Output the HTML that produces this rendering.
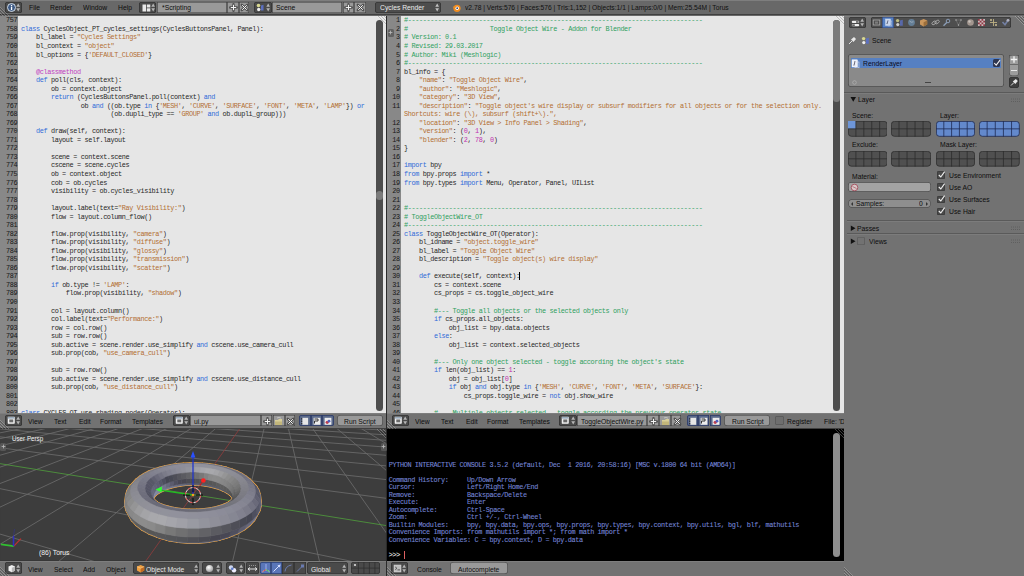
<!DOCTYPE html><html><head><meta charset="utf-8"><style>
*{margin:0;padding:0;box-sizing:border-box}
html,body{width:1024px;height:576px;overflow:hidden;background:#2b2b2b;position:relative}
.ui{position:absolute;font-family:"Liberation Sans",sans-serif;font-size:7.70px;line-height:10px;white-space:pre;color:#0d0d0d;transform:scaleX(0.88);transform-origin:0 0}
.mono{position:absolute;font-family:"Liberation Mono",monospace;font-size:6.850px;line-height:8.533px;letter-spacing:-0.3777px;white-space:pre;color:#262626;-webkit-text-stroke:0px currentColor}
.ab{position:absolute}
</style></head><body>
<div class="ab" style="left:0.00px;top:15.50px;width:386.00px;height:397.80px;overflow:hidden;background:#e6e6e6"><div style="position:absolute;left:0.00px;top:0.00px;width:18.00px;height:397.80px;background:#888888"></div><div class="mono" style="left:6.00px;top:0.90px;width:11.20px;text-align:right;color:#161616">757</div><div class="mono" style="left:6.00px;top:9.43px;width:11.20px;text-align:right;color:#161616">758</div><div class="mono" style="left:21.10px;top:9.43px"><span style="color:#2f6ad8">class</span> CyclesObject_PT_cycles_settings(CyclesButtonsPanel, Panel):</div><div class="mono" style="left:6.00px;top:17.97px;width:11.20px;text-align:right;color:#161616">759</div><div class="mono" style="left:21.10px;top:17.97px">    bl_label = <span style="color:#b26e32">"Cycles Settings"</span></div><div class="mono" style="left:6.00px;top:26.50px;width:11.20px;text-align:right;color:#161616">760</div><div class="mono" style="left:21.10px;top:26.50px">    bl_context = <span style="color:#b26e32">"object"</span></div><div class="mono" style="left:6.00px;top:35.03px;width:11.20px;text-align:right;color:#161616">761</div><div class="mono" style="left:21.10px;top:35.03px">    bl_options = {<span style="color:#b26e32">'DEFAULT_CLOSED'</span>}</div><div class="mono" style="left:6.00px;top:43.56px;width:11.20px;text-align:right;color:#161616">762</div><div class="mono" style="left:6.00px;top:52.10px;width:11.20px;text-align:right;color:#161616">763</div><div class="mono" style="left:21.10px;top:52.10px">    <span style="color:#c040c0">@classmethod</span></div><div class="mono" style="left:6.00px;top:60.63px;width:11.20px;text-align:right;color:#161616">764</div><div class="mono" style="left:21.10px;top:60.63px">    <span style="color:#2f6ad8">def</span> poll(cls, context):</div><div class="mono" style="left:6.00px;top:69.16px;width:11.20px;text-align:right;color:#161616">765</div><div class="mono" style="left:21.10px;top:69.16px">        ob = context.object</div><div class="mono" style="left:6.00px;top:77.70px;width:11.20px;text-align:right;color:#161616">766</div><div class="mono" style="left:21.10px;top:77.70px">        <span style="color:#2f6ad8">return</span> (CyclesButtonsPanel.poll(context) <span style="color:#2f6ad8">and</span></div><div class="mono" style="left:6.00px;top:86.23px;width:11.20px;text-align:right;color:#161616">767</div><div class="mono" style="left:21.10px;top:86.23px">                ob <span style="color:#2f6ad8">and</span> ((ob.type <span style="color:#2f6ad8">in</span> {<span style="color:#b26e32">'MESH'</span>, <span style="color:#b26e32">'CURVE'</span>, <span style="color:#b26e32">'SURFACE'</span>, <span style="color:#b26e32">'FONT'</span>, <span style="color:#b26e32">'META'</span>, <span style="color:#b26e32">'LAMP'</span>}) <span style="color:#2f6ad8">or</span></div><div class="mono" style="left:6.00px;top:94.76px;width:11.20px;text-align:right;color:#161616">768</div><div class="mono" style="left:21.10px;top:94.76px">                        (ob.dupli_type == <span style="color:#b26e32">'GROUP'</span> <span style="color:#2f6ad8">and</span> ob.dupli_group)))</div><div class="mono" style="left:6.00px;top:103.30px;width:11.20px;text-align:right;color:#161616">769</div><div class="mono" style="left:6.00px;top:111.83px;width:11.20px;text-align:right;color:#161616">770</div><div class="mono" style="left:21.10px;top:111.83px">    <span style="color:#2f6ad8">def</span> draw(self, context):</div><div class="mono" style="left:6.00px;top:120.36px;width:11.20px;text-align:right;color:#161616">771</div><div class="mono" style="left:21.10px;top:120.36px">        layout = self.layout</div><div class="mono" style="left:6.00px;top:128.89px;width:11.20px;text-align:right;color:#161616">772</div><div class="mono" style="left:6.00px;top:137.43px;width:11.20px;text-align:right;color:#161616">773</div><div class="mono" style="left:21.10px;top:137.43px">        scene = context.scene</div><div class="mono" style="left:6.00px;top:145.96px;width:11.20px;text-align:right;color:#161616">774</div><div class="mono" style="left:21.10px;top:145.96px">        cscene = scene.cycles</div><div class="mono" style="left:6.00px;top:154.49px;width:11.20px;text-align:right;color:#161616">775</div><div class="mono" style="left:21.10px;top:154.49px">        ob = context.object</div><div class="mono" style="left:6.00px;top:163.03px;width:11.20px;text-align:right;color:#161616">776</div><div class="mono" style="left:21.10px;top:163.03px">        cob = ob.cycles</div><div class="mono" style="left:6.00px;top:171.56px;width:11.20px;text-align:right;color:#161616">777</div><div class="mono" style="left:21.10px;top:171.56px">        visibility = ob.cycles_visibility</div><div class="mono" style="left:6.00px;top:180.09px;width:11.20px;text-align:right;color:#161616">778</div><div class="mono" style="left:6.00px;top:188.63px;width:11.20px;text-align:right;color:#161616">779</div><div class="mono" style="left:21.10px;top:188.63px">        layout.label(text=<span style="color:#b26e32">"Ray Visibility:"</span>)</div><div class="mono" style="left:6.00px;top:197.16px;width:11.20px;text-align:right;color:#161616">780</div><div class="mono" style="left:21.10px;top:197.16px">        flow = layout.column_flow()</div><div class="mono" style="left:6.00px;top:205.69px;width:11.20px;text-align:right;color:#161616">781</div><div class="mono" style="left:6.00px;top:214.22px;width:11.20px;text-align:right;color:#161616">782</div><div class="mono" style="left:21.10px;top:214.22px">        flow.prop(visibility, <span style="color:#b26e32">"camera"</span>)</div><div class="mono" style="left:6.00px;top:222.76px;width:11.20px;text-align:right;color:#161616">783</div><div class="mono" style="left:21.10px;top:222.76px">        flow.prop(visibility, <span style="color:#b26e32">"diffuse"</span>)</div><div class="mono" style="left:6.00px;top:231.29px;width:11.20px;text-align:right;color:#161616">784</div><div class="mono" style="left:21.10px;top:231.29px">        flow.prop(visibility, <span style="color:#b26e32">"glossy"</span>)</div><div class="mono" style="left:6.00px;top:239.82px;width:11.20px;text-align:right;color:#161616">785</div><div class="mono" style="left:21.10px;top:239.82px">        flow.prop(visibility, <span style="color:#b26e32">"transmission"</span>)</div><div class="mono" style="left:6.00px;top:248.36px;width:11.20px;text-align:right;color:#161616">786</div><div class="mono" style="left:21.10px;top:248.36px">        flow.prop(visibility, <span style="color:#b26e32">"scatter"</span>)</div><div class="mono" style="left:6.00px;top:256.89px;width:11.20px;text-align:right;color:#161616">787</div><div class="mono" style="left:6.00px;top:265.42px;width:11.20px;text-align:right;color:#161616">788</div><div class="mono" style="left:21.10px;top:265.42px">        <span style="color:#2f6ad8">if</span> ob.type != <span style="color:#b26e32">'LAMP'</span>:</div><div class="mono" style="left:6.00px;top:273.96px;width:11.20px;text-align:right;color:#161616">789</div><div class="mono" style="left:21.10px;top:273.96px">            flow.prop(visibility, <span style="color:#b26e32">"shadow"</span>)</div><div class="mono" style="left:6.00px;top:282.49px;width:11.20px;text-align:right;color:#161616">790</div><div class="mono" style="left:6.00px;top:291.02px;width:11.20px;text-align:right;color:#161616">791</div><div class="mono" style="left:21.10px;top:291.02px">        col = layout.column()</div><div class="mono" style="left:6.00px;top:299.55px;width:11.20px;text-align:right;color:#161616">792</div><div class="mono" style="left:21.10px;top:299.55px">        col.label(text=<span style="color:#b26e32">"Performance:"</span>)</div><div class="mono" style="left:6.00px;top:308.09px;width:11.20px;text-align:right;color:#161616">793</div><div class="mono" style="left:21.10px;top:308.09px">        row = col.row()</div><div class="mono" style="left:6.00px;top:316.62px;width:11.20px;text-align:right;color:#161616">794</div><div class="mono" style="left:21.10px;top:316.62px">        sub = row.row()</div><div class="mono" style="left:6.00px;top:325.15px;width:11.20px;text-align:right;color:#161616">795</div><div class="mono" style="left:21.10px;top:325.15px">        sub.active = scene.render.use_simplify <span style="color:#2f6ad8">and</span> cscene.use_camera_cull</div><div class="mono" style="left:6.00px;top:333.69px;width:11.20px;text-align:right;color:#161616">796</div><div class="mono" style="left:21.10px;top:333.69px">        sub.prop(cob, <span style="color:#b26e32">"use_camera_cull"</span>)</div><div class="mono" style="left:6.00px;top:342.22px;width:11.20px;text-align:right;color:#161616">797</div><div class="mono" style="left:6.00px;top:350.75px;width:11.20px;text-align:right;color:#161616">798</div><div class="mono" style="left:21.10px;top:350.75px">        sub = row.row()</div><div class="mono" style="left:6.00px;top:359.29px;width:11.20px;text-align:right;color:#161616">799</div><div class="mono" style="left:21.10px;top:359.29px">        sub.active = scene.render.use_simplify <span style="color:#2f6ad8">and</span> cscene.use_distance_cull</div><div class="mono" style="left:6.00px;top:367.82px;width:11.20px;text-align:right;color:#161616">800</div><div class="mono" style="left:21.10px;top:367.82px">        sub.prop(cob, <span style="color:#b26e32">"use_distance_cull"</span>)</div><div class="mono" style="left:6.00px;top:376.35px;width:11.20px;text-align:right;color:#161616">801</div><div class="mono" style="left:6.00px;top:384.88px;width:11.20px;text-align:right;color:#161616">802</div><div class="mono" style="left:6.00px;top:393.42px;width:11.20px;text-align:right;color:#161616">803</div><div class="mono" style="left:21.10px;top:393.42px"><span style="color:#2f6ad8">class</span> CYCLES_OT_use_shading_nodes(Operator):</div><div style="position:absolute;left:376.00px;top:4.00px;width:7.00px;height:391.00px;background:#4d4d4d;border-radius:3.5px"></div><div style="position:absolute;left:376.00px;top:175.30px;width:7.00px;height:9.10px;background:#7b7b7b;border-radius:3.5px"></div></div><div class="ab" style="left:387.00px;top:15.50px;width:456.50px;height:397.80px;overflow:hidden;background:#e6e6e6"><div style="position:absolute;left:0.00px;top:0.00px;width:14.00px;height:397.80px;background:#888888"></div><div class="mono" style="left:1.60px;top:0.90px;width:11.20px;text-align:right;color:#161616">1</div><div class="mono" style="left:17.10px;top:0.90px"><span style="color:#2ea05e">#-------------------------------------------------------------------------------</span></div><div class="mono" style="left:1.60px;top:9.43px;width:11.20px;text-align:right;color:#161616">2</div><div class="mono" style="left:17.10px;top:9.43px"><span style="color:#2ea05e">#                      Toggle Object Wire - Addon for Blender</span></div><div class="mono" style="left:1.60px;top:17.97px;width:11.20px;text-align:right;color:#161616">3</div><div class="mono" style="left:17.10px;top:17.97px"><span style="color:#2ea05e"># Version: 0.1</span></div><div class="mono" style="left:1.60px;top:26.50px;width:11.20px;text-align:right;color:#161616">4</div><div class="mono" style="left:17.10px;top:26.50px"><span style="color:#2ea05e"># Revised: 29.03.2017</span></div><div class="mono" style="left:1.60px;top:35.03px;width:11.20px;text-align:right;color:#161616">5</div><div class="mono" style="left:17.10px;top:35.03px"><span style="color:#2ea05e"># Author: Miki (Meshlogic)</span></div><div class="mono" style="left:1.60px;top:43.56px;width:11.20px;text-align:right;color:#161616">6</div><div class="mono" style="left:17.10px;top:43.56px"><span style="color:#2ea05e">#-------------------------------------------------------------------------------</span></div><div class="mono" style="left:1.60px;top:52.10px;width:11.20px;text-align:right;color:#161616">7</div><div class="mono" style="left:17.10px;top:52.10px">bl_info = {</div><div class="mono" style="left:1.60px;top:60.63px;width:11.20px;text-align:right;color:#161616">8</div><div class="mono" style="left:17.10px;top:60.63px">    <span style="color:#b26e32">"name"</span>: <span style="color:#b26e32">"Toggle Object Wire"</span>,</div><div class="mono" style="left:1.60px;top:69.16px;width:11.20px;text-align:right;color:#161616">9</div><div class="mono" style="left:17.10px;top:69.16px">    <span style="color:#b26e32">"author"</span>: <span style="color:#b26e32">"Meshlogic"</span>,</div><div class="mono" style="left:1.60px;top:77.70px;width:11.20px;text-align:right;color:#161616">10</div><div class="mono" style="left:17.10px;top:77.70px">    <span style="color:#b26e32">"category"</span>: <span style="color:#b26e32">"3D View"</span>,</div><div class="mono" style="left:1.60px;top:86.23px;width:11.20px;text-align:right;color:#161616">11</div><div class="mono" style="left:17.10px;top:86.23px">    <span style="color:#b26e32">"description"</span>: <span style="color:#b26e32">"Toggle object's wire display or subsurf modifiers for all objects or for the selection only.</span></div><div class="mono" style="left:17.10px;top:94.76px"><span style="color:#b26e32">Shortcuts: wire (\), subsurf (shift+\).",</span></div><div class="mono" style="left:1.60px;top:103.30px;width:11.20px;text-align:right;color:#161616">12</div><div class="mono" style="left:17.10px;top:103.30px">    <span style="color:#b26e32">"location"</span>: <span style="color:#b26e32">"3D View &gt; Info Panel &gt; Shading"</span>,</div><div class="mono" style="left:1.60px;top:111.83px;width:11.20px;text-align:right;color:#161616">13</div><div class="mono" style="left:17.10px;top:111.83px">    <span style="color:#b26e32">"version"</span>: (<span style="color:#c030b0">0</span>, <span style="color:#c030b0">1</span>),</div><div class="mono" style="left:1.60px;top:120.36px;width:11.20px;text-align:right;color:#161616">14</div><div class="mono" style="left:17.10px;top:120.36px">    <span style="color:#b26e32">"blender"</span>: (<span style="color:#c030b0">2</span>, <span style="color:#c030b0">78</span>, <span style="color:#c030b0">0</span>)</div><div class="mono" style="left:1.60px;top:128.89px;width:11.20px;text-align:right;color:#161616">15</div><div class="mono" style="left:17.10px;top:128.89px">}</div><div class="mono" style="left:1.60px;top:137.43px;width:11.20px;text-align:right;color:#161616">16</div><div class="mono" style="left:1.60px;top:145.96px;width:11.20px;text-align:right;color:#161616">17</div><div class="mono" style="left:17.10px;top:145.96px"><span style="color:#2f6ad8">import</span> bpy</div><div class="mono" style="left:1.60px;top:154.49px;width:11.20px;text-align:right;color:#161616">18</div><div class="mono" style="left:17.10px;top:154.49px"><span style="color:#2f6ad8">from</span> bpy.props <span style="color:#2f6ad8">import</span> *</div><div class="mono" style="left:1.60px;top:163.03px;width:11.20px;text-align:right;color:#161616">19</div><div class="mono" style="left:17.10px;top:163.03px"><span style="color:#2f6ad8">from</span> bpy.types <span style="color:#2f6ad8">import</span> Menu, Operator, Panel, UIList</div><div class="mono" style="left:1.60px;top:171.56px;width:11.20px;text-align:right;color:#161616">20</div><div class="mono" style="left:1.60px;top:180.09px;width:11.20px;text-align:right;color:#161616">21</div><div class="mono" style="left:1.60px;top:188.63px;width:11.20px;text-align:right;color:#161616">22</div><div class="mono" style="left:17.10px;top:188.63px"><span style="color:#2ea05e">#-------------------------------------------------------------------------------</span></div><div class="mono" style="left:1.60px;top:197.16px;width:11.20px;text-align:right;color:#161616">23</div><div class="mono" style="left:17.10px;top:197.16px"><span style="color:#2ea05e"># ToggleObjectWire_OT</span></div><div class="mono" style="left:1.60px;top:205.69px;width:11.20px;text-align:right;color:#161616">24</div><div class="mono" style="left:17.10px;top:205.69px"><span style="color:#2ea05e">#-------------------------------------------------------------------------------</span></div><div class="mono" style="left:1.60px;top:214.22px;width:11.20px;text-align:right;color:#161616">25</div><div class="mono" style="left:17.10px;top:214.22px"><span style="color:#2f6ad8">class</span> ToggleObjectWire_OT(Operator):</div><div class="mono" style="left:1.60px;top:222.76px;width:11.20px;text-align:right;color:#161616">26</div><div class="mono" style="left:17.10px;top:222.76px">    bl_idname = <span style="color:#b26e32">"object.toggle_wire"</span></div><div class="mono" style="left:1.60px;top:231.29px;width:11.20px;text-align:right;color:#161616">27</div><div class="mono" style="left:17.10px;top:231.29px">    bl_label = <span style="color:#b26e32">"Toggle Object Wire"</span></div><div class="mono" style="left:1.60px;top:239.82px;width:11.20px;text-align:right;color:#161616">28</div><div class="mono" style="left:17.10px;top:239.82px">    bl_description = <span style="color:#b26e32">"Toggle object(s) wire display"</span></div><div class="mono" style="left:1.60px;top:248.36px;width:11.20px;text-align:right;color:#161616">29</div><div class="mono" style="left:1.60px;top:256.89px;width:11.20px;text-align:right;color:#161616">30</div><div class="mono" style="left:17.10px;top:256.89px">    <span style="color:#2f6ad8">def</span> execute(self, context):</div><div class="mono" style="left:1.60px;top:265.42px;width:11.20px;text-align:right;color:#161616">31</div><div class="mono" style="left:17.10px;top:265.42px">        cs = context.scene</div><div class="mono" style="left:1.60px;top:273.96px;width:11.20px;text-align:right;color:#161616">32</div><div class="mono" style="left:17.10px;top:273.96px">        cs_props = cs.toggle_object_wire</div><div class="mono" style="left:1.60px;top:282.49px;width:11.20px;text-align:right;color:#161616">33</div><div class="mono" style="left:1.60px;top:291.02px;width:11.20px;text-align:right;color:#161616">34</div><div class="mono" style="left:17.10px;top:291.02px">        <span style="color:#2ea05e">#--- Toggle all objects or the selected objects only</span></div><div class="mono" style="left:1.60px;top:299.55px;width:11.20px;text-align:right;color:#161616">35</div><div class="mono" style="left:17.10px;top:299.55px">        <span style="color:#2f6ad8">if</span> cs_props.all_objects:</div><div class="mono" style="left:1.60px;top:308.09px;width:11.20px;text-align:right;color:#161616">36</div><div class="mono" style="left:17.10px;top:308.09px">            obj_list = bpy.data.objects</div><div class="mono" style="left:1.60px;top:316.62px;width:11.20px;text-align:right;color:#161616">37</div><div class="mono" style="left:17.10px;top:316.62px">        <span style="color:#2f6ad8">else</span>:</div><div class="mono" style="left:1.60px;top:325.15px;width:11.20px;text-align:right;color:#161616">38</div><div class="mono" style="left:17.10px;top:325.15px">            obj_list = context.selected_objects</div><div class="mono" style="left:1.60px;top:333.69px;width:11.20px;text-align:right;color:#161616">39</div><div class="mono" style="left:1.60px;top:342.22px;width:11.20px;text-align:right;color:#161616">40</div><div class="mono" style="left:17.10px;top:342.22px">        <span style="color:#2ea05e">#--- Only one object selected - toggle according the object's state</span></div><div class="mono" style="left:1.60px;top:350.75px;width:11.20px;text-align:right;color:#161616">41</div><div class="mono" style="left:17.10px;top:350.75px">        <span style="color:#2f6ad8">if</span> len(obj_list) == <span style="color:#c030b0">1</span>:</div><div class="mono" style="left:1.60px;top:359.29px;width:11.20px;text-align:right;color:#161616">42</div><div class="mono" style="left:17.10px;top:359.29px">            obj = obj_list[<span style="color:#c030b0">0</span>]</div><div class="mono" style="left:1.60px;top:367.82px;width:11.20px;text-align:right;color:#161616">43</div><div class="mono" style="left:17.10px;top:367.82px">            <span style="color:#2f6ad8">if</span> obj <span style="color:#2f6ad8">and</span> obj.type <span style="color:#2f6ad8">in</span> {<span style="color:#b26e32">'MESH'</span>, <span style="color:#b26e32">'CURVE'</span>, <span style="color:#b26e32">'FONT'</span>, <span style="color:#b26e32">'META'</span>, <span style="color:#b26e32">'SURFACE'</span>}:</div><div class="mono" style="left:1.60px;top:376.35px;width:11.20px;text-align:right;color:#161616">44</div><div class="mono" style="left:17.10px;top:376.35px">                cs_props.toggle_wire = <span style="color:#2f6ad8">not</span> obj.show_wire</div><div class="mono" style="left:1.60px;top:384.88px;width:11.20px;text-align:right;color:#161616">45</div><div class="mono" style="left:1.60px;top:393.42px;width:11.20px;text-align:right;color:#161616">46</div><div class="mono" style="left:17.10px;top:393.42px">        <span style="color:#2ea05e">#--- Multiple objects selected - toggle according the previous operator state</span></div><div style="position:absolute;left:446.20px;top:4.00px;width:7.20px;height:391.00px;background:#4d4d4d;border-radius:3.5px"></div><div style="position:absolute;left:446.20px;top:4.20px;width:7.20px;height:82.10px;background:#7b7b7b;border-radius:3.5px"></div><div style="position:absolute;left:132.00px;top:256.50px;width:0.90px;height:7.50px;background:#000"></div></div><div style="position:absolute;left:0.00px;top:0.00px;width:1024.00px;height:15.50px;background:#686868"></div><div style="position:absolute;left:0.00px;top:0.00px;width:1024.00px;height:0.80px;background:#7e7e7e"></div><div style="position:absolute;left:0.00px;top:14.30px;width:1024.00px;height:1.20px;background:#404040"></div><div style="position:absolute;left:5.00px;top:2.00px;width:17.00px;height:11.00px;background:#4a4a4a;border-radius:2.5px;box-shadow:inset 0 0 0 0.6px #2e2e2e"></div><svg class="ab" style="left:7.20px;top:3.20px;" width="9.00" height="9.00" viewBox="0 0 9 9"><circle cx="4.5" cy="4.5" r="4" fill="#3d5a85" stroke="#dfe8f0" stroke-width="0.9"/><rect x="3.9" y="3.7" width="1.3" height="3.4" fill="#fff"/><circle cx="4.55" cy="2.5" r="0.75" fill="#fff"/></svg><svg class="ab" style="left:16.30px;top:3.00px;" width="4.40" height="9.00" viewBox="0 0 4.4 9"><path d="M0.3 3.8 L2.2 0.6 L4.1 3.8Z M0.3 5.2 L2.2 8.4 L4.1 5.2Z" fill="#d0d0d0" opacity="0.8"/></svg><div class="ui" style="left:29.00px;top:3.20px;color:#0d0d0d;font-size:7.7px;">File</div><div class="ui" style="left:50.00px;top:3.20px;color:#0d0d0d;font-size:7.7px;">Render</div><div class="ui" style="left:83.00px;top:3.20px;color:#0d0d0d;font-size:7.7px;">Window</div><div class="ui" style="left:118.00px;top:3.20px;color:#0d0d0d;font-size:7.7px;">Help</div><div style="position:absolute;left:139.40px;top:2.00px;width:16.90px;height:11.00px;background:#4a4a4a;border-radius:2.5px;box-shadow:inset 0 0 0 0.6px #2e2e2e"></div><svg class="ab" style="left:141.50px;top:3.50px;" width="9.00" height="8.00" viewBox="0 0 9 8"><rect x="0.5" y="0.5" width="3.5" height="7" fill="#e8e8e8"/><rect x="4.8" y="0.5" width="3.5" height="3" fill="#e8e8e8"/><rect x="4.8" y="4.3" width="3.5" height="3.2" fill="#e8e8e8"/></svg><svg class="ab" style="left:150.60px;top:3.00px;" width="4.40" height="9.00" viewBox="0 0 4.4 9"><path d="M0.3 3.8 L2.2 0.6 L4.1 3.8Z M0.3 5.2 L2.2 8.4 L4.1 5.2Z" fill="#d0d0d0" opacity="0.8"/></svg><div style="position:absolute;left:156.90px;top:2.00px;width:70.40px;height:11.00px;background:#999999;border-radius:0px;box-shadow:inset 0 0 0 0.6px #3a3a3a"></div><div class="ui" style="left:161.50px;top:3.20px;color:#0d0d0d;font-size:7.7px;">*Scripting</div><div style="position:absolute;left:227.30px;top:2.00px;width:11.50px;height:11.00px;background:#999999;border-radius:0px;box-shadow:inset 0 0 0 0.6px #3a3a3a"></div><svg class="ab" style="left:229.30px;top:2.80px;" width="9.00" height="9.00" viewBox="0 0 9 9"><path d="M4.5 1.2 V7.8 M1.2 4.5 H7.8" stroke="#505050" stroke-width="2.4" stroke-linecap="round"/><path d="M4.5 1.8 V7.2 M1.8 4.5 H7.2" stroke="#f4f4f4" stroke-width="1.0"/></svg><div style="position:absolute;left:238.80px;top:2.00px;width:10.60px;height:11.00px;background:#999999;border-radius:0px;box-shadow:inset 0 0 0 0.6px #3a3a3a"></div><svg class="ab" style="left:240.30px;top:2.80px;" width="9.00" height="9.00" viewBox="0 0 9 9"><path d="M1.8 1.8 L7.2 7.2 M7.2 1.8 L1.8 7.2" stroke="#505050" stroke-width="2.4" stroke-linecap="round"/><path d="M2.2 2.2 L6.8 6.8 M6.8 2.2 L2.2 6.8" stroke="#f4f4f4" stroke-width="1.0"/></svg><div style="position:absolute;left:254.40px;top:2.00px;width:17.50px;height:11.00px;background:#4a4a4a;border-radius:2.5px;box-shadow:inset 0 0 0 0.6px #2e2e2e"></div><svg class="ab" style="left:256.00px;top:3.00px;" width="9.00" height="9.00" viewBox="0 0 9 9"><circle cx="2.5" cy="2.5" r="1.8" fill="#d8d890"/><circle cx="2.7" cy="6.5" r="1.7" fill="#eee"/><path d="M5 2.5 L7.5 1.8 L7.5 7.5 L5 7.5Z" fill="#5b6fc0"/></svg><svg class="ab" style="left:266.10px;top:3.00px;" width="4.40" height="9.00" viewBox="0 0 4.4 9"><path d="M0.3 3.8 L2.2 0.6 L4.1 3.8Z M0.3 5.2 L2.2 8.4 L4.1 5.2Z" fill="#d0d0d0" opacity="0.8"/></svg><div style="position:absolute;left:271.90px;top:2.00px;width:70.60px;height:11.00px;background:#999999;border-radius:0px;box-shadow:inset 0 0 0 0.6px #3a3a3a"></div><div class="ui" style="left:276.00px;top:3.20px;color:#0d0d0d;font-size:7.7px;">Scene</div><div style="position:absolute;left:342.50px;top:2.00px;width:11.50px;height:11.00px;background:#999999;border-radius:0px;box-shadow:inset 0 0 0 0.6px #3a3a3a"></div><svg class="ab" style="left:343.80px;top:2.80px;" width="9.00" height="9.00" viewBox="0 0 9 9"><path d="M4.5 1.2 V7.8 M1.2 4.5 H7.8" stroke="#505050" stroke-width="2.4" stroke-linecap="round"/><path d="M4.5 1.8 V7.2 M1.8 4.5 H7.2" stroke="#f4f4f4" stroke-width="1.0"/></svg><div style="position:absolute;left:354.00px;top:2.00px;width:12.30px;height:11.00px;background:#999999;border-radius:0px;box-shadow:inset 0 0 0 0.6px #3a3a3a"></div><svg class="ab" style="left:355.70px;top:2.80px;" width="9.00" height="9.00" viewBox="0 0 9 9"><path d="M1.8 1.8 L7.2 7.2 M7.2 1.8 L1.8 7.2" stroke="#505050" stroke-width="2.4" stroke-linecap="round"/><path d="M2.2 2.2 L6.8 6.8 M6.8 2.2 L2.2 6.8" stroke="#f4f4f4" stroke-width="1.0"/></svg><div style="position:absolute;left:375.00px;top:1.80px;width:65.60px;height:11.40px;background:#4d4d4d;border-radius:3px;box-shadow:inset 0 0 0 0.6px #2e2e2e"></div><div class="ui" style="left:379.50px;top:3.20px;color:#ececec;font-size:7.7px;">Cycles Render</div><svg class="ab" style="left:434.80px;top:3.00px;" width="4.40" height="9.00" viewBox="0 0 4.4 9"><path d="M0.3 3.8 L2.2 0.6 L4.1 3.8Z M0.3 5.2 L2.2 8.4 L4.1 5.2Z" fill="#e0e0e0" opacity="0.8"/></svg><svg class="ab" style="left:451.50px;top:2.50px;" width="9.00" height="10.00" viewBox="0 0 9 10"><circle cx="5" cy="5.3" r="3.6" fill="#f08c20"/><circle cx="5.2" cy="5.2" r="1.7" fill="#fff"/><circle cx="5.2" cy="5.2" r="0.9" fill="#2c4a80"/><path d="M0.5 4 L3 3.3 L2.2 5Z" fill="#f08c20"/></svg><div class="ui" style="left:465.30px;top:3.20px;color:#101010;font-size:7.7px;transform:scaleX(0.870)">v2.78 | Verts:576 | Faces:576 | Tris:1,152 | Objects:1/1 | Lamps:0/0 | Mem:25.54M | Torus</div><div style="position:absolute;left:0.00px;top:413.40px;width:386.00px;height:15.50px;background:#727272"></div><div style="position:absolute;left:0.00px;top:413.40px;width:386.00px;height:0.80px;background:#7e7e7e"></div><div style="position:absolute;left:0.00px;top:427.70px;width:386.00px;height:1.20px;background:#404040"></div><div style="position:absolute;left:5.00px;top:415.00px;width:17.00px;height:11.30px;background:#4a4a4a;border-radius:2.5px;box-shadow:inset 0 0 0 0.6px #2e2e2e"></div><svg class="ab" style="left:7.20px;top:416.20px;" width="8.50" height="8.50" viewBox="0 0 8.5 8.5"><rect x="1" y="1" width="6.5" height="6.5" fill="#e8e8e8" stroke="#fff" stroke-width="0.5"/><rect x="2.3" y="3.5" width="3.9" height="2.8" fill="#6a6a6a"/><rect x="1" y="1" width="6.5" height="1.6" fill="#9ab"/></svg><svg class="ab" style="left:16.30px;top:416.15px;" width="4.40" height="9.00" viewBox="0 0 4.4 9"><path d="M0.3 3.8 L2.2 0.6 L4.1 3.8Z M0.3 5.2 L2.2 8.4 L4.1 5.2Z" fill="#d0d0d0" opacity="0.8"/></svg><div class="ui" style="left:28.00px;top:417.40px;color:#0d0d0d;font-size:7.7px;">View</div><div class="ui" style="left:53.50px;top:417.40px;color:#0d0d0d;font-size:7.7px;">Text</div><div class="ui" style="left:78.50px;top:417.40px;color:#0d0d0d;font-size:7.7px;">Edit</div><div class="ui" style="left:100.00px;top:417.40px;color:#0d0d0d;font-size:7.7px;">Format</div><div class="ui" style="left:132.20px;top:417.40px;color:#0d0d0d;font-size:7.7px;">Templates</div><div style="position:absolute;left:172.50px;top:415.00px;width:17.50px;height:11.30px;background:#4a4a4a;border-radius:2.5px;box-shadow:inset 0 0 0 0.6px #2e2e2e"></div><svg class="ab" style="left:174.50px;top:416.40px;" width="8.50" height="8.50" viewBox="0 0 8.5 8.5"><rect x="1" y="1" width="6.5" height="6.5" fill="#e8e8e8" stroke="#fff" stroke-width="0.5"/><rect x="2.3" y="3.5" width="3.9" height="2.8" fill="#6a6a6a"/><rect x="1" y="1" width="6.5" height="1.6" fill="#9ab"/></svg><svg class="ab" style="left:184.30px;top:416.10px;" width="4.40" height="9.00" viewBox="0 0 4.4 9"><path d="M0.3 3.8 L2.2 0.6 L4.1 3.8Z M0.3 5.2 L2.2 8.4 L4.1 5.2Z" fill="#d0d0d0" opacity="0.8"/></svg><div style="position:absolute;left:190.00px;top:415.00px;width:70.60px;height:11.30px;background:#999999;border-radius:0px;box-shadow:inset 0 0 0 0.6px #3a3a3a"></div><div class="ui" style="left:194.00px;top:417.40px;color:#0d0d0d;font-size:7.7px;">ui.py</div><div style="position:absolute;left:260.60px;top:415.00px;width:11.90px;height:11.30px;background:#999999;border-radius:0px;box-shadow:inset 0 0 0 0.6px #3a3a3a"></div><svg class="ab" style="left:262.60px;top:416.50px;" width="9.00" height="9.00" viewBox="0 0 9 9"><path d="M4.5 1.2 V7.8 M1.2 4.5 H7.8" stroke="#505050" stroke-width="2.4" stroke-linecap="round"/><path d="M4.5 1.8 V7.2 M1.8 4.5 H7.2" stroke="#f4f4f4" stroke-width="1.0"/></svg><div style="position:absolute;left:272.50px;top:415.00px;width:12.50px;height:11.30px;background:#999999;border-radius:0px;box-shadow:inset 0 0 0 0.6px #3a3a3a"></div><svg class="ab" style="left:274.10px;top:416.60px;" width="9.00" height="9.00" viewBox="0 0 9 9"><path d="M1 3 H4 L4.8 2 H8 V8 H1Z" fill="#d8cf9a"/><rect x="1" y="4.5" width="7" height="3.5" fill="#c2b67a"/><path d="M3 1 Q5 -0.2 7 1.2" stroke="#ddd" stroke-width="0.6" fill="none"/></svg><div style="position:absolute;left:285.00px;top:415.00px;width:10.10px;height:11.30px;background:#999999;border-radius:0px;box-shadow:inset 0 0 0 0.6px #3a3a3a"></div><svg class="ab" style="left:286.10px;top:416.60px;" width="9.00" height="9.00" viewBox="0 0 9 9"><path d="M1.8 1.8 L7.2 7.2 M7.2 1.8 L1.8 7.2" stroke="#505050" stroke-width="2.4" stroke-linecap="round"/><path d="M2.2 2.2 L6.8 6.8 M6.8 2.2 L2.2 6.8" stroke="#f4f4f4" stroke-width="1.0"/></svg><div style="position:absolute;left:299.40px;top:415.00px;width:11.45px;height:11.30px;background:#5b6a8a;box-shadow:inset 0 0 0 0.8px #2c3a66;border-radius:2.5px 0 0 2.5px"></div><div style="position:absolute;left:310.85px;top:415.00px;width:11.45px;height:11.30px;background:#5b6a8a;box-shadow:inset 0 0 0 0.8px #2c3a66;"></div><div style="position:absolute;left:322.30px;top:415.00px;width:11.45px;height:11.30px;background:#5b6a8a;box-shadow:inset 0 0 0 0.8px #2c3a66;border-radius:0 2.5px 2.5px 0"></div><svg class="ab" style="left:301.40px;top:416.50px;" width="8.00" height="8.50" viewBox="0 0 8 8.5"><rect x="1.3" y="0.8" width="5.8" height="7" fill="#e6e6e6"/><rect x="0.2" y="1.2" width="1" height="1.3" fill="#222"/><rect x="0.2" y="3.6" width="1" height="1.3" fill="#222"/><rect x="0.2" y="6" width="1" height="1.3" fill="#222"/></svg><svg class="ab" style="left:312.90px;top:416.50px;" width="8.00" height="8.50" viewBox="0 0 8 8.5"><rect x="0.6" y="0.8" width="6.8" height="7" fill="#ececec"/><path d="M1.5 2 H5 V4 H1.5 V6.5" stroke="#333" stroke-width="1" fill="none"/></svg><svg class="ab" style="left:324.40px;top:416.50px;" width="8.00" height="8.50" viewBox="0 0 8 8.5"><rect x="0.6" y="0.8" width="6.8" height="7" fill="#ececec"/><circle cx="3.2" cy="5.3" r="1.6" fill="#c04050"/><circle cx="5" cy="4.2" r="1.4" fill="#5060c0"/></svg><div style="position:absolute;left:336.90px;top:415.00px;width:46.10px;height:11.30px;background:#999999;border-radius:3.5px;box-shadow:inset 0 0 0 0.6px #3a3a3a"></div><div class="ui" style="left:344.45px;top:417.40px;color:#0d0d0d;font-size:7.7px;">Run Script</div><div style="position:absolute;left:387.00px;top:413.40px;width:456.50px;height:15.50px;background:#727272"></div><div style="position:absolute;left:387.00px;top:413.40px;width:456.50px;height:0.80px;background:#7e7e7e"></div><div style="position:absolute;left:387.00px;top:427.70px;width:456.50px;height:1.20px;background:#404040"></div><div style="position:absolute;left:392.00px;top:415.00px;width:17.00px;height:11.30px;background:#4a4a4a;border-radius:2.5px;box-shadow:inset 0 0 0 0.6px #2e2e2e"></div><svg class="ab" style="left:394.20px;top:416.20px;" width="8.50" height="8.50" viewBox="0 0 8.5 8.5"><rect x="1" y="1" width="6.5" height="6.5" fill="#e8e8e8" stroke="#fff" stroke-width="0.5"/><rect x="2.3" y="3.5" width="3.9" height="2.8" fill="#6a6a6a"/><rect x="1" y="1" width="6.5" height="1.6" fill="#9ab"/></svg><svg class="ab" style="left:403.30px;top:416.15px;" width="4.40" height="9.00" viewBox="0 0 4.4 9"><path d="M0.3 3.8 L2.2 0.6 L4.1 3.8Z M0.3 5.2 L2.2 8.4 L4.1 5.2Z" fill="#d0d0d0" opacity="0.8"/></svg><div class="ui" style="left:415.00px;top:417.40px;color:#0d0d0d;font-size:7.7px;">View</div><div class="ui" style="left:440.50px;top:417.40px;color:#0d0d0d;font-size:7.7px;">Text</div><div class="ui" style="left:465.50px;top:417.40px;color:#0d0d0d;font-size:7.7px;">Edit</div><div class="ui" style="left:487.00px;top:417.40px;color:#0d0d0d;font-size:7.7px;">Format</div><div class="ui" style="left:519.20px;top:417.40px;color:#0d0d0d;font-size:7.7px;">Templates</div><div style="position:absolute;left:559.40px;top:415.00px;width:17.50px;height:11.30px;background:#4a4a4a;border-radius:2.5px;box-shadow:inset 0 0 0 0.6px #2e2e2e"></div><svg class="ab" style="left:561.40px;top:416.40px;" width="8.50" height="8.50" viewBox="0 0 8.5 8.5"><rect x="1" y="1" width="6.5" height="6.5" fill="#e8e8e8" stroke="#fff" stroke-width="0.5"/><rect x="2.3" y="3.5" width="3.9" height="2.8" fill="#6a6a6a"/><rect x="1" y="1" width="6.5" height="1.6" fill="#9ab"/></svg><svg class="ab" style="left:571.20px;top:416.10px;" width="4.40" height="9.00" viewBox="0 0 4.4 9"><path d="M0.3 3.8 L2.2 0.6 L4.1 3.8Z M0.3 5.2 L2.2 8.4 L4.1 5.2Z" fill="#d0d0d0" opacity="0.8"/></svg><div style="position:absolute;left:576.90px;top:415.00px;width:70.10px;height:11.30px;background:#999999;border-radius:0px;box-shadow:inset 0 0 0 0.6px #3a3a3a"></div><div class="ui" style="left:580.90px;top:417.40px;color:#0d0d0d;font-size:7.7px;">ToggleObjectWire.py</div><div style="position:absolute;left:647.00px;top:415.00px;width:11.90px;height:11.30px;background:#999999;border-radius:0px;box-shadow:inset 0 0 0 0.6px #3a3a3a"></div><svg class="ab" style="left:649.00px;top:416.50px;" width="9.00" height="9.00" viewBox="0 0 9 9"><path d="M4.5 1.2 V7.8 M1.2 4.5 H7.8" stroke="#505050" stroke-width="2.4" stroke-linecap="round"/><path d="M4.5 1.8 V7.2 M1.8 4.5 H7.2" stroke="#f4f4f4" stroke-width="1.0"/></svg><div style="position:absolute;left:658.90px;top:415.00px;width:12.50px;height:11.30px;background:#999999;border-radius:0px;box-shadow:inset 0 0 0 0.6px #3a3a3a"></div><svg class="ab" style="left:660.50px;top:416.60px;" width="9.00" height="9.00" viewBox="0 0 9 9"><path d="M1 3 H4 L4.8 2 H8 V8 H1Z" fill="#d8cf9a"/><rect x="1" y="4.5" width="7" height="3.5" fill="#c2b67a"/><path d="M3 1 Q5 -0.2 7 1.2" stroke="#ddd" stroke-width="0.6" fill="none"/></svg><div style="position:absolute;left:671.40px;top:415.00px;width:10.10px;height:11.30px;background:#999999;border-radius:0px;box-shadow:inset 0 0 0 0.6px #3a3a3a"></div><svg class="ab" style="left:672.50px;top:416.60px;" width="9.00" height="9.00" viewBox="0 0 9 9"><path d="M1.8 1.8 L7.2 7.2 M7.2 1.8 L1.8 7.2" stroke="#505050" stroke-width="2.4" stroke-linecap="round"/><path d="M2.2 2.2 L6.8 6.8 M6.8 2.2 L2.2 6.8" stroke="#f4f4f4" stroke-width="1.0"/></svg><div style="position:absolute;left:686.60px;top:415.00px;width:11.45px;height:11.30px;background:#5b6a8a;box-shadow:inset 0 0 0 0.8px #2c3a66;border-radius:2.5px 0 0 2.5px"></div><div style="position:absolute;left:698.05px;top:415.00px;width:11.45px;height:11.30px;background:#5b6a8a;box-shadow:inset 0 0 0 0.8px #2c3a66;"></div><div style="position:absolute;left:709.50px;top:415.00px;width:11.45px;height:11.30px;background:#5b6a8a;box-shadow:inset 0 0 0 0.8px #2c3a66;border-radius:0 2.5px 2.5px 0"></div><svg class="ab" style="left:688.60px;top:416.50px;" width="8.00" height="8.50" viewBox="0 0 8 8.5"><rect x="1.3" y="0.8" width="5.8" height="7" fill="#e6e6e6"/><rect x="0.2" y="1.2" width="1" height="1.3" fill="#222"/><rect x="0.2" y="3.6" width="1" height="1.3" fill="#222"/><rect x="0.2" y="6" width="1" height="1.3" fill="#222"/></svg><svg class="ab" style="left:700.10px;top:416.50px;" width="8.00" height="8.50" viewBox="0 0 8 8.5"><rect x="0.6" y="0.8" width="6.8" height="7" fill="#ececec"/><path d="M1.5 2 H5 V4 H1.5 V6.5" stroke="#333" stroke-width="1" fill="none"/></svg><svg class="ab" style="left:711.60px;top:416.50px;" width="8.00" height="8.50" viewBox="0 0 8 8.5"><rect x="0.6" y="0.8" width="6.8" height="7" fill="#ececec"/><circle cx="3.2" cy="5.3" r="1.6" fill="#c04050"/><circle cx="5" cy="4.2" r="1.4" fill="#5060c0"/></svg><div style="position:absolute;left:724.30px;top:415.00px;width:45.70px;height:11.30px;background:#999999;border-radius:3.5px;box-shadow:inset 0 0 0 0.6px #3a3a3a"></div><div class="ui" style="left:731.65px;top:417.40px;color:#0d0d0d;font-size:7.7px;">Run Script</div><div style="position:absolute;left:775.00px;top:415.50px;width:8.50px;height:9.50px;border-radius:2px;box-shadow:inset 0 0 0 0.7px #555;background:#6e6e6e"></div><div class="ui" style="left:787.40px;top:417.40px;color:#0d0d0d;font-size:7.7px;">Register</div><div class="ui" style="left:824.30px;top:417.40px;color:#0d0d0d;font-size:7.7px;">File: 'D:\Blender</div><svg class="ab" style="left:0px;top:428.9px" width="386" height="131.7" viewBox="0 0 386 131.7"><rect width="386" height="131.7" fill="#3d3d3d"/><line x1="66802.5" y1="9678.9" x2="532.6" y2="-14.4" stroke="#6c6c6c" stroke-width="0.85"/><line x1="62213.3" y1="9678.9" x2="509.9" y2="-15.2" stroke="#6c6c6c" stroke-width="0.85"/><line x1="57624.1" y1="9678.9" x2="488.1" y2="-16.0" stroke="#6c6c6c" stroke-width="0.85"/><line x1="53035.0" y1="9678.9" x2="467.2" y2="-16.7" stroke="#6c6c6c" stroke-width="0.85"/><line x1="48445.8" y1="9678.9" x2="447.1" y2="-17.4" stroke="#6c6c6c" stroke-width="0.85"/><line x1="43856.6" y1="9678.9" x2="427.8" y2="-18.1" stroke="#6c6c6c" stroke-width="0.85"/><line x1="-75945.7" y1="9678.9" x2="-13045.9" y2="1561.9" stroke="#6c6c6c" stroke-width="0.85"/><line x1="39267.4" y1="9678.9" x2="409.3" y2="-18.8" stroke="#6c6c6c" stroke-width="0.85"/><line x1="-62336.4" y1="9678.9" x2="-3262.1" y2="376.7" stroke="#6c6c6c" stroke-width="0.85"/><line x1="34678.2" y1="9678.9" x2="391.4" y2="-19.4" stroke="#6c6c6c" stroke-width="0.85"/><line x1="-48727.1" y1="9678.9" x2="-1763.8" y2="195.2" stroke="#6c6c6c" stroke-width="0.85"/><line x1="30089.1" y1="9678.9" x2="374.2" y2="-20.0" stroke="#6c6c6c" stroke-width="0.85"/><line x1="-35117.9" y1="9678.9" x2="-1156.9" y2="121.7" stroke="#6c6c6c" stroke-width="0.85"/><line x1="25499.9" y1="9678.9" x2="357.7" y2="-20.6" stroke="#6c6c6c" stroke-width="0.85"/><line x1="-21508.6" y1="9678.9" x2="-828.3" y2="81.9" stroke="#6c6c6c" stroke-width="0.85"/><line x1="20910.7" y1="9678.9" x2="341.7" y2="-21.1" stroke="#6c6c6c" stroke-width="0.85"/><line x1="-7899.3" y1="9678.9" x2="-622.3" y2="56.9" stroke="#6c6c6c" stroke-width="0.85"/><line x1="16321.5" y1="9678.9" x2="326.3" y2="-21.7" stroke="#6c6c6c" stroke-width="0.85"/><line x1="5709.9" y1="9678.9" x2="-481.0" y2="39.8" stroke="#6c6c6c" stroke-width="0.85"/><line x1="11732.3" y1="9678.9" x2="311.4" y2="-22.2" stroke="#6c6c6c" stroke-width="0.85"/><line x1="19319.2" y1="9678.9" x2="-378.1" y2="27.4" stroke="#6c6c6c" stroke-width="0.85"/><line x1="7143.1" y1="9678.9" x2="297.0" y2="-22.7" stroke="#6c6c6c" stroke-width="0.85"/><line x1="32928.5" y1="9678.9" x2="-299.9" y2="17.9" stroke="#6c6c6c" stroke-width="0.85"/><line x1="2554.0" y1="9678.9" x2="283.1" y2="-23.2" stroke="#6c6c6c" stroke-width="0.85"/><line x1="46537.8" y1="9678.9" x2="-238.3" y2="10.4" stroke="#6c6c6c" stroke-width="0.85"/><line x1="-2035.2" y1="9678.9" x2="269.6" y2="-23.6" stroke="#6c6c6c" stroke-width="0.85"/><line x1="7265.4" y1="970.4" x2="-147.7" y2="-0.6" stroke="#6c6c6c" stroke-width="0.85"/><line x1="-11213.6" y1="9678.9" x2="244.0" y2="-24.5" stroke="#6c6c6c" stroke-width="0.85"/><line x1="2816.4" y1="319.6" x2="-113.4" y2="-4.7" stroke="#6c6c6c" stroke-width="0.85"/><line x1="-15802.8" y1="9678.9" x2="231.8" y2="-25.0" stroke="#6c6c6c" stroke-width="0.85"/><line x1="1828.4" y1="175.1" x2="-84.3" y2="-8.2" stroke="#6c6c6c" stroke-width="0.85"/><line x1="-20392.0" y1="9678.9" x2="219.9" y2="-25.4" stroke="#6c6c6c" stroke-width="0.85"/><line x1="1393.8" y1="111.5" x2="-59.1" y2="-11.3" stroke="#6c6c6c" stroke-width="0.85"/><line x1="-24981.1" y1="9678.9" x2="208.5" y2="-25.8" stroke="#6c6c6c" stroke-width="0.85"/><line x1="1149.3" y1="75.8" x2="-37.3" y2="-13.9" stroke="#6c6c6c" stroke-width="0.85"/><line x1="-29570.3" y1="9678.9" x2="197.3" y2="-26.2" stroke="#6c6c6c" stroke-width="0.85"/><line x1="992.6" y1="52.8" x2="-18.1" y2="-16.3" stroke="#6c6c6c" stroke-width="0.85"/><line x1="-34159.5" y1="9678.9" x2="186.5" y2="-26.5" stroke="#6c6c6c" stroke-width="0.85"/><line x1="883.6" y1="36.9" x2="-1.2" y2="-18.3" stroke="#6c6c6c" stroke-width="0.85"/><line x1="-38748.7" y1="9678.9" x2="176.0" y2="-26.9" stroke="#6c6c6c" stroke-width="0.85"/><line x1="803.4" y1="25.2" x2="13.9" y2="-20.1" stroke="#6c6c6c" stroke-width="0.85"/><line x1="-43337.9" y1="9678.9" x2="165.8" y2="-27.3" stroke="#6c6c6c" stroke-width="0.85"/><line x1="741.9" y1="16.2" x2="27.5" y2="-21.8" stroke="#6c6c6c" stroke-width="0.85"/><line x1="-47927.1" y1="9678.9" x2="155.9" y2="-27.6" stroke="#6c6c6c" stroke-width="0.85"/><line x1="693.3" y1="9.1" x2="39.7" y2="-23.3" stroke="#6c6c6c" stroke-width="0.85"/><line x1="-52516.2" y1="9678.9" x2="146.2" y2="-27.9" stroke="#6c6c6c" stroke-width="0.85"/><line x1="653.8" y1="3.3" x2="50.8" y2="-24.6" stroke="#6c6c6c" stroke-width="0.85"/><line x1="-57105.4" y1="9678.9" x2="136.9" y2="-28.3" stroke="#6c6c6c" stroke-width="0.85"/><line x1="621.2" y1="-1.5" x2="60.9" y2="-25.8" stroke="#6c6c6c" stroke-width="0.85"/><line x1="-61694.6" y1="9678.9" x2="127.7" y2="-28.6" stroke="#6c6c6c" stroke-width="0.85"/><line x1="593.8" y1="-5.5" x2="70.1" y2="-26.9" stroke="#6c6c6c" stroke-width="0.85"/><line x1="-66283.8" y1="9678.9" x2="118.9" y2="-28.9" stroke="#6c6c6c" stroke-width="0.85"/><line x1="570.4" y1="-8.9" x2="78.6" y2="-28.0" stroke="#6c6c6c" stroke-width="0.85"/><line x1="-70873.0" y1="9678.9" x2="110.2" y2="-29.2" stroke="#6c6c6c" stroke-width="0.85"/><line x1="550.2" y1="-11.9" x2="86.4" y2="-28.9" stroke="#6c6c6c" stroke-width="0.85"/><line x1="-75462.1" y1="9678.9" x2="101.8" y2="-29.5" stroke="#6c6c6c" stroke-width="0.85"/><line x1="532.6" y1="-14.4" x2="93.6" y2="-29.8" stroke="#6c6c6c" stroke-width="0.85"/><line x1="-80051.3" y1="9678.9" x2="93.6" y2="-29.8" stroke="#6c6c6c" stroke-width="0.85"/><line x1="60147.0" y1="9678.9" x2="-188.7" y2="4.4" stroke="#4f9a3c" stroke-width="0.85"/><line x1="-6624.4" y1="9678.9" x2="256.6" y2="-24.1" stroke="#8c3c3c" stroke-width="0.85"/><g fill="#e8a040" stroke="#e8a040" stroke-width="2.0" stroke-linejoin="round"><polygon points="196.1,34.3 189.7,34.3 190.0,34.8 195.8,34.8"/><polygon points="202.4,34.5 196.1,34.3 195.8,34.8 201.6,35.0"/><polygon points="189.7,34.3 183.4,34.6 184.2,35.1 190.0,34.8"/><polygon points="208.7,35.1 202.4,34.5 201.6,35.0 207.3,35.6"/><polygon points="183.4,34.6 177.1,35.1 178.5,35.6 184.2,35.1"/><polygon points="195.2,54.0 190.7,54.0 190.4,55.9 195.4,55.8"/><polygon points="214.9,36.0 208.7,35.1 207.3,35.6 212.9,36.4"/><polygon points="177.1,35.1 170.9,36.0 172.9,36.4 178.5,35.6"/><polygon points="199.7,54.2 195.2,54.0 195.4,55.8 200.4,56.1"/><polygon points="190.7,54.0 186.1,54.2 185.5,56.1 190.4,55.9"/><polygon points="204.2,54.7 199.7,54.2 200.4,56.1 205.2,56.7"/><polygon points="186.1,54.2 181.6,54.7 180.6,56.7 185.5,56.1"/><polygon points="208.6,55.5 204.2,54.7 205.2,56.7 210.0,57.5"/><polygon points="220.9,37.2 214.9,36.0 212.9,36.4 218.3,37.4"/><polygon points="181.6,54.7 177.3,55.5 175.9,57.6 180.6,56.7"/><polygon points="170.9,36.0 164.9,37.2 167.5,37.5 172.9,36.4"/><polygon points="195.8,34.8 190.0,34.8 190.3,38.2 195.5,38.2"/><polygon points="201.6,35.0 195.8,34.8 195.5,38.2 200.7,38.4"/><polygon points="190.0,34.8 184.2,35.1 185.2,38.4 190.3,38.2"/><polygon points="212.8,56.5 208.6,55.5 210.0,57.5 214.6,58.7"/><polygon points="177.3,55.5 173.1,56.5 171.3,58.7 175.9,57.6"/><polygon points="207.3,35.6 201.6,35.0 200.7,38.4 205.8,38.9"/><polygon points="184.2,35.1 178.5,35.6 180.1,38.9 185.2,38.4"/><polygon points="195.2,49.5 190.7,49.5 190.7,54.0 195.2,54.0"/><polygon points="226.6,38.6 220.9,37.2 218.3,37.4 223.5,38.8"/><polygon points="164.9,37.2 159.2,38.7 162.3,38.8 167.5,37.5"/><polygon points="199.6,49.7 195.2,49.5 195.2,54.0 199.7,54.2"/><polygon points="190.7,49.5 186.3,49.7 186.1,54.2 190.7,54.0"/><polygon points="212.9,36.4 207.3,35.6 205.8,38.9 210.7,39.7"/><polygon points="178.5,35.6 172.9,36.4 175.1,39.7 180.1,38.9"/><polygon points="203.9,50.2 199.6,49.7 199.7,54.2 204.2,54.7"/><polygon points="186.3,49.7 181.9,50.2 181.6,54.7 186.1,54.2"/><polygon points="216.8,57.7 212.8,56.5 214.6,58.7 219.0,60.1"/><polygon points="173.1,56.5 169.1,57.8 166.9,60.1 171.3,58.7"/><polygon points="195.5,38.2 190.3,38.2 190.6,43.6 195.3,43.6"/><polygon points="200.7,38.4 195.5,38.2 195.3,43.6 199.9,43.9"/><polygon points="190.3,38.2 185.2,38.4 185.9,43.9 190.6,43.6"/><polygon points="208.2,50.9 203.9,50.2 204.2,54.7 208.6,55.5"/><polygon points="181.9,50.2 177.7,50.9 177.3,55.5 181.6,54.7"/><polygon points="218.3,37.4 212.9,36.4 210.7,39.7 215.5,40.6"/><polygon points="195.3,43.6 190.6,43.6 190.7,49.5 195.2,49.5"/><polygon points="172.9,36.4 167.5,37.5 170.3,40.7 175.1,39.7"/><polygon points="199.9,43.9 195.3,43.6 195.2,49.5 199.6,49.7"/><polygon points="190.6,43.6 185.9,43.9 186.3,49.7 190.7,49.5"/><polygon points="205.8,38.9 200.7,38.4 199.9,43.9 204.5,44.3"/><polygon points="185.2,38.4 180.1,38.9 181.4,44.4 185.9,43.9"/><polygon points="232.1,40.4 226.6,38.6 223.5,38.8 228.5,40.4"/><polygon points="204.5,44.3 199.9,43.9 199.6,49.7 203.9,50.2"/><polygon points="185.9,43.9 181.4,44.4 181.9,50.2 186.3,49.7"/><polygon points="159.2,38.7 153.7,40.4 157.4,40.4 162.3,38.8"/><polygon points="212.3,51.8 208.2,50.9 208.6,55.5 212.8,56.5"/><polygon points="220.5,59.2 216.8,57.7 219.0,60.1 223.1,61.7"/><polygon points="177.7,50.9 173.6,51.9 173.1,56.5 177.3,55.5"/><polygon points="169.1,57.8 165.4,59.3 162.8,61.8 166.9,60.1"/><polygon points="210.7,39.7 205.8,38.9 204.5,44.3 209.0,45.0"/><polygon points="180.1,38.9 175.1,39.7 176.9,45.1 181.4,44.4"/><polygon points="209.0,45.0 204.5,44.3 203.9,50.2 208.2,50.9"/><polygon points="181.4,44.4 176.9,45.1 177.7,50.9 181.9,50.2"/><polygon points="223.5,38.8 218.3,37.4 215.5,40.6 220.1,41.9"/><polygon points="167.5,37.5 162.3,38.8 165.8,41.9 170.3,40.7"/><polygon points="215.5,40.6 210.7,39.7 209.0,45.0 213.3,46.0"/><polygon points="216.1,53.0 212.3,51.8 212.8,56.5 216.8,57.7"/><polygon points="175.1,39.7 170.3,40.7 172.6,46.0 176.9,45.1"/><polygon points="173.6,51.9 169.7,53.0 169.1,57.8 173.1,56.5"/><polygon points="213.3,46.0 209.0,45.0 208.2,50.9 212.3,51.8"/><polygon points="176.9,45.1 172.6,46.0 173.6,51.9 177.7,50.9"/><polygon points="223.9,61.0 220.5,59.2 223.1,61.7 226.8,63.7"/><polygon points="165.4,59.3 162.0,61.0 159.1,63.7 162.8,61.8"/><polygon points="237.3,42.4 232.1,40.4 228.5,40.4 233.0,42.2"/><polygon points="153.7,40.4 148.6,42.5 152.8,42.3 157.4,40.4"/><polygon points="228.5,40.4 223.5,38.8 220.1,41.9 224.4,43.3"/><polygon points="220.1,41.9 215.5,40.6 213.3,46.0 217.4,47.1"/><polygon points="162.3,38.8 157.4,40.4 161.5,43.4 165.8,41.9"/><polygon points="170.3,40.7 165.8,41.9 168.5,47.2 172.6,46.0"/><polygon points="219.7,54.4 216.1,53.0 216.8,57.7 220.5,59.2"/><polygon points="217.4,47.1 213.3,46.0 212.3,51.8 216.1,53.0"/><polygon points="169.7,53.0 166.1,54.4 165.4,59.3 169.1,57.8"/><polygon points="172.6,46.0 168.5,47.2 169.7,53.0 173.6,51.9"/><polygon points="226.9,62.9 223.9,61.0 226.8,63.7 230.2,65.9"/><polygon points="162.0,61.0 159.0,63.0 155.7,65.9 159.1,63.7"/><polygon points="224.4,43.3 220.1,41.9 217.4,47.1 221.2,48.5"/><polygon points="165.8,41.9 161.5,43.4 164.7,48.6 168.5,47.2"/><polygon points="221.2,48.5 217.4,47.1 216.1,53.0 219.7,54.4"/><polygon points="168.5,47.2 164.7,48.6 166.1,54.4 169.7,53.0"/><polygon points="223.0,56.0 219.7,54.4 220.5,59.2 223.9,61.0"/><polygon points="166.1,54.4 162.9,56.1 162.0,61.0 165.4,59.3"/><polygon points="233.0,42.2 228.5,40.4 224.4,43.3 228.4,45.0"/><polygon points="157.4,40.4 152.8,42.3 157.5,45.1 161.5,43.4"/><polygon points="242.0,44.8 237.3,42.4 233.0,42.2 237.2,44.4"/><polygon points="148.6,42.5 143.9,44.9 148.7,44.4 152.8,42.3"/><polygon points="224.7,50.1 221.2,48.5 219.7,54.4 223.0,56.0"/><polygon points="164.7,48.6 161.2,50.2 162.9,56.1 166.1,54.4"/><polygon points="228.4,45.0 224.4,43.3 221.2,48.5 224.7,50.1"/><polygon points="229.5,65.1 226.9,62.9 230.2,65.9 233.1,68.3"/><polygon points="161.5,43.4 157.5,45.1 161.2,50.2 164.7,48.6"/><polygon points="159.0,63.0 156.5,65.2 152.8,68.4 155.7,65.9"/><polygon points="226.0,57.8 223.0,56.0 223.9,61.0 226.9,62.9"/><polygon points="162.9,56.1 160.0,57.9 159.0,63.0 162.0,61.0"/><polygon points="237.2,44.4 233.0,42.2 228.4,45.0 231.9,47.0"/><polygon points="152.8,42.3 148.7,44.4 154.0,47.0 157.5,45.1"/><polygon points="246.1,47.5 242.0,44.8 237.2,44.4 240.8,46.7"/><polygon points="143.9,44.9 139.8,47.5 145.1,46.8 148.7,44.4"/><polygon points="227.8,51.9 224.7,50.1 223.0,56.0 226.0,57.8"/><polygon points="161.2,50.2 158.1,52.0 160.0,57.9 162.9,56.1"/><polygon points="231.9,47.0 228.4,45.0 224.7,50.1 227.8,51.9"/><polygon points="157.5,45.1 154.0,47.0 158.1,52.0 161.2,50.2"/><polygon points="228.4,59.8 226.0,57.8 226.9,62.9 229.5,65.1"/><polygon points="160.0,57.9 157.5,59.9 156.5,65.2 159.0,63.0"/><polygon points="240.8,46.7 237.2,44.4 231.9,47.0 235.0,49.1"/><polygon points="148.7,44.4 145.1,46.8 150.9,49.2 154.0,47.0"/><polygon points="230.5,54.0 227.8,51.9 226.0,57.8 228.4,59.8"/><polygon points="158.1,52.0 155.5,54.0 157.5,59.9 160.0,57.9"/><polygon points="235.0,49.1 231.9,47.0 227.8,51.9 230.5,54.0"/><polygon points="154.0,47.0 150.9,49.2 155.5,54.0 158.1,52.0"/><polygon points="230.4,62.0 228.4,59.8 229.5,65.1 231.5,67.4"/><polygon points="249.7,50.4 246.1,47.5 240.8,46.7 243.8,49.3"/><polygon points="157.5,59.9 155.5,62.1 154.4,67.5 156.5,65.2"/><polygon points="139.8,47.5 136.2,50.5 142.1,49.4 145.1,46.8"/><polygon points="256.6,57.8 253.4,54.3 249.7,50.4 252.5,53.6"/><polygon points="132.5,54.4 129.4,57.9 133.5,53.7 136.2,50.5"/><polygon points="232.6,56.1 230.5,54.0 228.4,59.8 230.4,62.0"/><polygon points="243.8,49.3 240.8,46.7 235.0,49.1 237.5,51.5"/><polygon points="155.5,54.0 153.3,56.2 155.5,62.1 157.5,59.9"/><polygon points="145.1,46.8 142.1,49.4 148.4,51.5 150.9,49.2"/><polygon points="237.5,51.5 235.0,49.1 230.5,54.0 232.6,56.1"/><polygon points="150.9,49.2 148.4,51.5 153.3,56.2 155.5,54.0"/><polygon points="231.9,64.4 230.4,62.0 231.5,67.4 233.0,69.9"/><polygon points="155.5,62.1 154.1,64.4 152.9,70.0 154.4,67.5"/><polygon points="252.5,53.6 249.7,50.4 243.8,49.3 246.2,52.2"/><polygon points="136.2,50.5 133.5,53.7 139.8,52.3 142.1,49.4"/><polygon points="234.2,58.5 232.6,56.1 230.4,62.0 231.9,64.4"/><polygon points="153.3,56.2 151.8,58.6 154.1,64.4 155.5,62.1"/><polygon points="246.2,52.2 243.8,49.3 237.5,51.5 239.4,54.0"/><polygon points="142.1,49.4 139.8,52.3 146.5,54.1 148.4,51.5"/><polygon points="232.7,66.8 231.9,64.4 233.0,69.9 233.9,72.6"/><polygon points="239.4,54.0 237.5,51.5 232.6,56.1 234.2,58.5"/><polygon points="154.1,64.4 153.3,66.9 152.1,72.7 152.9,70.0"/><polygon points="148.4,51.5 146.5,54.1 151.8,58.6 153.3,56.2"/><polygon points="258.8,61.6 256.6,57.8 252.5,53.6 254.4,57.0"/><polygon points="129.4,57.9 127.2,61.8 131.5,57.1 133.5,53.7"/><polygon points="235.1,60.9 234.2,58.5 231.9,64.4 232.7,66.8"/><polygon points="151.8,58.6 150.9,61.0 153.3,66.9 154.1,64.4"/><polygon points="254.4,57.0 252.5,53.6 246.2,52.2 247.7,55.2"/><polygon points="133.5,53.7 131.5,57.1 138.2,55.3 139.8,52.3"/><polygon points="240.6,56.7 239.4,54.0 234.2,58.5 235.1,60.9"/><polygon points="146.5,54.1 145.4,56.7 150.9,61.0 151.8,58.6"/><polygon points="247.7,55.2 246.2,52.2 239.4,54.0 240.6,56.7"/><polygon points="139.8,52.3 138.2,55.3 145.4,56.7 146.5,54.1"/><polygon points="260.0,65.7 258.8,61.6 254.4,57.0 255.4,60.7"/><polygon points="235.3,63.5 235.1,60.9 232.7,66.8 232.9,69.3"/><polygon points="150.9,61.0 150.7,63.6 153.1,69.4 153.3,66.9"/><polygon points="127.2,61.8 126.0,65.8 130.6,60.8 131.5,57.1"/><polygon points="255.4,60.7 254.4,57.0 247.7,55.2 248.4,58.4"/><polygon points="241.0,59.4 240.6,56.7 235.1,60.9 235.3,63.5"/><polygon points="145.4,56.7 145.0,59.5 150.7,63.6 150.9,61.0"/><polygon points="131.5,57.1 130.6,60.8 137.6,58.5 138.2,55.3"/><polygon points="248.4,58.4 247.7,55.2 240.6,56.7 241.0,59.4"/><polygon points="138.2,55.3 137.6,58.5 145.0,59.5 145.4,56.7"/><polygon points="261.0,76.5 260.9,72.0 260.0,65.7 260.0,70.0"/><polygon points="125.1,72.1 125.0,76.6 126.0,70.1 126.0,65.8"/><polygon points="234.8,66.1 235.3,63.5 232.9,69.3 232.3,71.9"/><polygon points="150.7,63.6 151.2,66.2 153.7,72.0 153.1,69.4"/><polygon points="260.0,70.0 260.0,65.7 255.4,60.7 255.3,64.5"/><polygon points="126.0,65.8 126.0,70.1 130.7,64.6 130.6,60.8"/><polygon points="240.6,62.3 241.0,59.4 235.3,63.5 234.8,66.1"/><polygon points="145.0,59.5 145.5,62.4 151.2,66.2 150.7,63.6"/><polygon points="255.3,64.5 255.4,60.7 248.4,58.4 248.1,61.6"/><polygon points="248.1,61.6 248.4,58.4 241.0,59.4 240.6,62.3"/><polygon points="130.6,60.8 130.7,64.6 137.9,61.7 137.6,58.5"/><polygon points="137.6,58.5 137.9,61.7 145.5,62.4 145.0,59.5"/><polygon points="259.7,81.2 261.0,76.5 260.0,70.0 258.8,74.3"/><polygon points="125.0,76.6 126.3,81.3 127.3,74.5 126.0,70.1"/><polygon points="239.2,65.2 240.6,62.3 234.8,66.1 233.5,68.7"/><polygon points="145.5,62.4 146.9,65.3 152.6,68.8 151.2,66.2"/><polygon points="258.8,74.3 260.0,70.0 255.3,64.5 254.0,68.3"/><polygon points="126.0,70.1 127.3,74.5 132.1,68.4 130.7,64.6"/><polygon points="246.7,65.0 248.1,61.6 240.6,62.3 239.2,65.2"/><polygon points="137.9,61.7 139.3,65.1 146.9,65.3 145.5,62.4"/><polygon points="254.0,68.3 255.3,64.5 248.1,61.6 246.7,65.0"/><polygon points="254.1,91.5 256.7,86.9 259.7,81.2 257.1,85.9"/><polygon points="130.7,64.6 132.1,68.4 139.3,65.1 137.9,61.7"/><polygon points="129.4,87.0 132.0,91.7 129.0,86.0 126.3,81.3"/><polygon points="236.9,68.0 239.2,65.2 233.5,68.7 231.3,71.3"/><polygon points="146.9,65.3 149.2,68.1 154.7,71.3 152.6,68.8"/><polygon points="257.1,85.9 259.7,81.2 258.8,74.3 256.1,78.7"/><polygon points="126.3,81.3 129.0,86.0 130.0,78.9 127.3,74.5"/><polygon points="244.2,68.3 246.7,65.0 239.2,65.2 236.9,68.0"/><polygon points="139.3,65.1 141.9,68.4 149.2,68.1 146.9,65.3"/><polygon points="256.1,78.7 258.8,74.3 254.0,68.3 251.4,72.2"/><polygon points="127.3,74.5 130.0,78.9 134.7,72.3 132.1,68.4"/><polygon points="251.4,72.2 254.0,68.3 246.7,65.0 244.2,68.3"/><polygon points="132.1,68.4 134.7,72.3 141.9,68.4 139.3,65.1"/><polygon points="233.6,70.7 236.9,68.0 231.3,71.3 228.4,73.7"/><polygon points="149.2,68.1 152.5,70.8 157.7,73.8 154.7,71.3"/><polygon points="250.0,96.1 254.1,91.5 257.1,85.9 252.9,90.5"/><polygon points="132.0,91.7 136.2,96.2 133.2,90.6 129.0,86.0"/><polygon points="240.6,71.5 244.2,68.3 236.9,68.0 233.6,70.7"/><polygon points="141.9,68.4 145.6,71.6 152.5,70.8 149.2,68.1"/><polygon points="252.9,90.5 257.1,85.9 256.1,78.7 252.0,83.0"/><polygon points="129.0,86.0 133.2,90.6 134.1,83.2 130.0,78.9"/><polygon points="229.3,73.3 233.6,70.7 228.4,73.7 224.6,76.0"/><polygon points="152.5,70.8 156.8,73.3 161.5,76.0 157.7,73.8"/><polygon points="247.4,76.0 251.4,72.2 244.2,68.3 240.6,71.5"/><polygon points="252.0,83.0 256.1,78.7 251.4,72.2 247.4,76.0"/><polygon points="134.7,72.3 138.7,76.1 145.6,71.6 141.9,68.4"/><polygon points="130.0,78.9 134.1,83.2 138.7,76.1 134.7,72.3"/><polygon points="244.5,100.4 250.0,96.1 252.9,90.5 247.2,94.9"/><polygon points="136.2,96.2 141.7,100.6 139.0,95.0 133.2,90.6"/><polygon points="235.8,74.5 240.6,71.5 233.6,70.7 229.3,73.3"/><polygon points="145.6,71.6 150.4,74.5 156.8,73.3 152.5,70.8"/><polygon points="247.2,94.9 252.9,90.5 252.0,83.0 246.3,87.1"/><polygon points="133.2,90.6 139.0,95.0 139.9,87.2 134.1,83.2"/><polygon points="242.1,79.5 247.4,76.0 240.6,71.5 235.8,74.5"/><polygon points="138.7,76.1 144.1,79.6 150.4,74.5 145.6,71.6"/><polygon points="246.3,87.1 252.0,83.0 247.4,76.0 242.1,79.5"/><polygon points="134.1,83.2 139.9,87.2 144.1,79.6 138.7,76.1"/><polygon points="237.5,104.4 244.5,100.4 247.2,94.9 239.9,98.9"/><polygon points="141.7,100.6 148.7,104.5 146.3,99.0 139.0,95.0"/><polygon points="229.8,77.2 235.8,74.5 229.3,73.3 224.2,75.5"/><polygon points="150.4,74.5 156.4,77.2 162.0,75.6 156.8,73.3"/><polygon points="216.9,111.4 225.4,109.0 229.2,107.8 219.8,110.5"/><polygon points="160.9,109.1 169.4,111.5 166.5,110.5 157.0,107.8"/><polygon points="239.9,98.9 247.2,94.9 246.3,87.1 239.2,90.8"/><polygon points="139.0,95.0 146.3,99.0 147.1,90.9 139.9,87.2"/><polygon points="235.4,82.8 242.1,79.5 235.8,74.5 229.8,77.2"/><polygon points="144.1,79.6 150.8,82.9 156.4,77.2 150.4,74.5"/><polygon points="222.9,79.5 229.8,77.2 224.2,75.5 218.2,77.4"/><polygon points="156.4,77.2 163.4,79.5 168.0,77.5 162.0,75.6"/><polygon points="229.2,107.8 237.5,104.4 239.9,98.9 231.3,102.3"/><polygon points="148.7,104.5 157.0,107.8 155.0,102.4 146.3,99.0"/><polygon points="239.2,90.8 246.3,87.1 242.1,79.5 235.4,82.8"/><polygon points="139.9,87.2 147.1,90.9 150.8,82.9 144.1,79.6"/><polygon points="207.7,113.1 216.9,111.4 219.8,110.5 209.5,112.3"/><polygon points="169.4,111.5 178.6,113.1 176.8,112.4 166.5,110.5"/><polygon points="215.0,81.3 222.9,79.5 218.2,77.4 211.6,79.0"/><polygon points="163.4,79.5 171.2,81.3 174.6,79.0 168.0,77.5"/><polygon points="198.1,114.0 207.7,113.1 209.5,112.3 198.7,113.3"/><polygon points="178.6,113.1 188.2,114.0 187.6,113.3 176.8,112.4"/><polygon points="227.5,85.5 235.4,82.8 229.8,77.2 222.9,79.5"/><polygon points="150.8,82.9 158.8,85.6 163.4,79.5 156.4,77.2"/><polygon points="188.2,114.0 198.1,114.0 198.7,113.3 187.6,113.3"/><polygon points="231.3,102.3 239.9,98.9 239.2,90.8 230.6,94.0"/><polygon points="146.3,99.0 155.0,102.4 155.7,94.1 147.1,90.9"/><polygon points="219.8,110.5 229.2,107.8 231.3,102.3 221.4,105.1"/><polygon points="157.0,107.8 166.5,110.5 165.0,105.1 155.0,102.4"/><polygon points="206.6,82.6 215.0,81.3 211.6,79.0 204.4,80.0"/><polygon points="171.2,81.3 179.7,82.6 181.8,80.0 174.6,79.0"/><polygon points="230.6,94.0 239.2,90.8 235.4,82.8 227.5,85.5"/><polygon points="147.1,90.9 155.7,94.1 158.8,85.6 150.8,82.9"/><polygon points="197.7,83.2 206.6,82.6 204.4,80.0 196.9,80.5"/><polygon points="179.7,82.6 188.6,83.2 189.3,80.6 181.8,80.0"/><polygon points="188.6,83.2 197.7,83.2 196.9,80.5 189.3,80.6"/><polygon points="218.5,87.7 227.5,85.5 222.9,79.5 215.0,81.3"/><polygon points="158.8,85.6 167.8,87.8 171.2,81.3 163.4,79.5"/><polygon points="209.5,112.3 219.8,110.5 221.4,105.1 210.5,107.0"/><polygon points="166.5,110.5 176.8,112.4 175.9,107.0 165.0,105.1"/><polygon points="221.4,105.1 231.3,102.3 230.6,94.0 220.9,96.6"/><polygon points="155.0,102.4 165.0,105.1 165.4,96.7 155.7,94.1"/><polygon points="198.7,113.3 209.5,112.3 210.5,107.0 199.0,108.0"/><polygon points="176.8,112.4 187.6,113.3 187.3,108.0 175.9,107.0"/><polygon points="220.9,96.6 230.6,94.0 227.5,85.5 218.5,87.7"/><polygon points="155.7,94.1 165.4,96.7 167.8,87.8 158.8,85.6"/><polygon points="208.7,89.3 218.5,87.7 215.0,81.3 206.6,82.6"/><polygon points="187.6,113.3 198.7,113.3 199.0,108.0 187.3,108.0"/><polygon points="167.8,87.8 177.6,89.3 179.7,82.6 171.2,81.3"/><polygon points="210.5,107.0 221.4,105.1 220.9,96.6 210.2,98.4"/><polygon points="165.0,105.1 175.9,107.0 176.1,98.4 165.4,96.7"/><polygon points="198.4,90.1 208.7,89.3 206.6,82.6 197.7,83.2"/><polygon points="177.6,89.3 187.9,90.1 188.6,83.2 179.7,82.6"/><polygon points="187.9,90.1 198.4,90.1 197.7,83.2 188.6,83.2"/><polygon points="210.2,98.4 220.9,96.6 218.5,87.7 208.7,89.3"/><polygon points="165.4,96.7 176.1,98.4 177.6,89.3 167.8,87.8"/><polygon points="199.0,108.0 210.5,107.0 210.2,98.4 198.9,99.3"/><polygon points="175.9,107.0 187.3,108.0 187.4,99.3 176.1,98.4"/><polygon points="187.3,108.0 199.0,108.0 198.9,99.3 187.4,99.3"/><polygon points="198.9,99.3 210.2,98.4 208.7,89.3 198.4,90.1"/><polygon points="176.1,98.4 187.4,99.3 187.9,90.1 177.6,89.3"/><polygon points="187.4,99.3 198.9,99.3 198.4,90.1 187.9,90.1"/></g><g fill="#9a9aa4" stroke="#9a9aa4" stroke-width="0.7" stroke-linejoin="round"><polygon points="196.1,34.3 189.7,34.3 190.0,34.8 195.8,34.8"/><polygon points="202.4,34.5 196.1,34.3 195.8,34.8 201.6,35.0"/><polygon points="189.7,34.3 183.4,34.6 184.2,35.1 190.0,34.8"/><polygon points="208.7,35.1 202.4,34.5 201.6,35.0 207.3,35.6"/><polygon points="183.4,34.6 177.1,35.1 178.5,35.6 184.2,35.1"/><polygon points="195.2,54.0 190.7,54.0 190.4,55.9 195.4,55.8"/><polygon points="214.9,36.0 208.7,35.1 207.3,35.6 212.9,36.4"/><polygon points="177.1,35.1 170.9,36.0 172.9,36.4 178.5,35.6"/><polygon points="199.7,54.2 195.2,54.0 195.4,55.8 200.4,56.1"/><polygon points="190.7,54.0 186.1,54.2 185.5,56.1 190.4,55.9"/><polygon points="204.2,54.7 199.7,54.2 200.4,56.1 205.2,56.7"/><polygon points="186.1,54.2 181.6,54.7 180.6,56.7 185.5,56.1"/><polygon points="208.6,55.5 204.2,54.7 205.2,56.7 210.0,57.5"/><polygon points="220.9,37.2 214.9,36.0 212.9,36.4 218.3,37.4"/><polygon points="181.6,54.7 177.3,55.5 175.9,57.6 180.6,56.7"/><polygon points="170.9,36.0 164.9,37.2 167.5,37.5 172.9,36.4"/><polygon points="195.8,34.8 190.0,34.8 190.3,38.2 195.5,38.2"/><polygon points="201.6,35.0 195.8,34.8 195.5,38.2 200.7,38.4"/><polygon points="190.0,34.8 184.2,35.1 185.2,38.4 190.3,38.2"/><polygon points="212.8,56.5 208.6,55.5 210.0,57.5 214.6,58.7"/><polygon points="177.3,55.5 173.1,56.5 171.3,58.7 175.9,57.6"/><polygon points="207.3,35.6 201.6,35.0 200.7,38.4 205.8,38.9"/><polygon points="184.2,35.1 178.5,35.6 180.1,38.9 185.2,38.4"/><polygon points="195.2,49.5 190.7,49.5 190.7,54.0 195.2,54.0"/><polygon points="226.6,38.6 220.9,37.2 218.3,37.4 223.5,38.8"/><polygon points="164.9,37.2 159.2,38.7 162.3,38.8 167.5,37.5"/><polygon points="199.6,49.7 195.2,49.5 195.2,54.0 199.7,54.2"/><polygon points="190.7,49.5 186.3,49.7 186.1,54.2 190.7,54.0"/><polygon points="212.9,36.4 207.3,35.6 205.8,38.9 210.7,39.7"/><polygon points="178.5,35.6 172.9,36.4 175.1,39.7 180.1,38.9"/><polygon points="203.9,50.2 199.6,49.7 199.7,54.2 204.2,54.7"/><polygon points="186.3,49.7 181.9,50.2 181.6,54.7 186.1,54.2"/><polygon points="216.8,57.7 212.8,56.5 214.6,58.7 219.0,60.1"/><polygon points="173.1,56.5 169.1,57.8 166.9,60.1 171.3,58.7"/><polygon points="195.5,38.2 190.3,38.2 190.6,43.6 195.3,43.6"/><polygon points="200.7,38.4 195.5,38.2 195.3,43.6 199.9,43.9"/><polygon points="190.3,38.2 185.2,38.4 185.9,43.9 190.6,43.6"/><polygon points="208.2,50.9 203.9,50.2 204.2,54.7 208.6,55.5"/><polygon points="181.9,50.2 177.7,50.9 177.3,55.5 181.6,54.7"/><polygon points="218.3,37.4 212.9,36.4 210.7,39.7 215.5,40.6"/><polygon points="195.3,43.6 190.6,43.6 190.7,49.5 195.2,49.5"/><polygon points="172.9,36.4 167.5,37.5 170.3,40.7 175.1,39.7"/><polygon points="199.9,43.9 195.3,43.6 195.2,49.5 199.6,49.7"/><polygon points="190.6,43.6 185.9,43.9 186.3,49.7 190.7,49.5"/><polygon points="205.8,38.9 200.7,38.4 199.9,43.9 204.5,44.3"/><polygon points="185.2,38.4 180.1,38.9 181.4,44.4 185.9,43.9"/><polygon points="232.1,40.4 226.6,38.6 223.5,38.8 228.5,40.4"/><polygon points="204.5,44.3 199.9,43.9 199.6,49.7 203.9,50.2"/><polygon points="185.9,43.9 181.4,44.4 181.9,50.2 186.3,49.7"/><polygon points="159.2,38.7 153.7,40.4 157.4,40.4 162.3,38.8"/><polygon points="212.3,51.8 208.2,50.9 208.6,55.5 212.8,56.5"/><polygon points="220.5,59.2 216.8,57.7 219.0,60.1 223.1,61.7"/><polygon points="177.7,50.9 173.6,51.9 173.1,56.5 177.3,55.5"/><polygon points="169.1,57.8 165.4,59.3 162.8,61.8 166.9,60.1"/><polygon points="210.7,39.7 205.8,38.9 204.5,44.3 209.0,45.0"/><polygon points="180.1,38.9 175.1,39.7 176.9,45.1 181.4,44.4"/><polygon points="209.0,45.0 204.5,44.3 203.9,50.2 208.2,50.9"/><polygon points="181.4,44.4 176.9,45.1 177.7,50.9 181.9,50.2"/><polygon points="223.5,38.8 218.3,37.4 215.5,40.6 220.1,41.9"/><polygon points="167.5,37.5 162.3,38.8 165.8,41.9 170.3,40.7"/><polygon points="215.5,40.6 210.7,39.7 209.0,45.0 213.3,46.0"/><polygon points="216.1,53.0 212.3,51.8 212.8,56.5 216.8,57.7"/><polygon points="175.1,39.7 170.3,40.7 172.6,46.0 176.9,45.1"/><polygon points="173.6,51.9 169.7,53.0 169.1,57.8 173.1,56.5"/><polygon points="213.3,46.0 209.0,45.0 208.2,50.9 212.3,51.8"/><polygon points="176.9,45.1 172.6,46.0 173.6,51.9 177.7,50.9"/><polygon points="223.9,61.0 220.5,59.2 223.1,61.7 226.8,63.7"/><polygon points="165.4,59.3 162.0,61.0 159.1,63.7 162.8,61.8"/><polygon points="237.3,42.4 232.1,40.4 228.5,40.4 233.0,42.2"/><polygon points="153.7,40.4 148.6,42.5 152.8,42.3 157.4,40.4"/><polygon points="228.5,40.4 223.5,38.8 220.1,41.9 224.4,43.3"/><polygon points="220.1,41.9 215.5,40.6 213.3,46.0 217.4,47.1"/><polygon points="162.3,38.8 157.4,40.4 161.5,43.4 165.8,41.9"/><polygon points="170.3,40.7 165.8,41.9 168.5,47.2 172.6,46.0"/><polygon points="219.7,54.4 216.1,53.0 216.8,57.7 220.5,59.2"/><polygon points="217.4,47.1 213.3,46.0 212.3,51.8 216.1,53.0"/><polygon points="169.7,53.0 166.1,54.4 165.4,59.3 169.1,57.8"/><polygon points="172.6,46.0 168.5,47.2 169.7,53.0 173.6,51.9"/><polygon points="226.9,62.9 223.9,61.0 226.8,63.7 230.2,65.9"/><polygon points="162.0,61.0 159.0,63.0 155.7,65.9 159.1,63.7"/><polygon points="224.4,43.3 220.1,41.9 217.4,47.1 221.2,48.5"/><polygon points="165.8,41.9 161.5,43.4 164.7,48.6 168.5,47.2"/><polygon points="221.2,48.5 217.4,47.1 216.1,53.0 219.7,54.4"/><polygon points="168.5,47.2 164.7,48.6 166.1,54.4 169.7,53.0"/><polygon points="223.0,56.0 219.7,54.4 220.5,59.2 223.9,61.0"/><polygon points="166.1,54.4 162.9,56.1 162.0,61.0 165.4,59.3"/><polygon points="233.0,42.2 228.5,40.4 224.4,43.3 228.4,45.0"/><polygon points="157.4,40.4 152.8,42.3 157.5,45.1 161.5,43.4"/><polygon points="242.0,44.8 237.3,42.4 233.0,42.2 237.2,44.4"/><polygon points="148.6,42.5 143.9,44.9 148.7,44.4 152.8,42.3"/><polygon points="224.7,50.1 221.2,48.5 219.7,54.4 223.0,56.0"/><polygon points="164.7,48.6 161.2,50.2 162.9,56.1 166.1,54.4"/><polygon points="228.4,45.0 224.4,43.3 221.2,48.5 224.7,50.1"/><polygon points="229.5,65.1 226.9,62.9 230.2,65.9 233.1,68.3"/><polygon points="161.5,43.4 157.5,45.1 161.2,50.2 164.7,48.6"/><polygon points="159.0,63.0 156.5,65.2 152.8,68.4 155.7,65.9"/><polygon points="226.0,57.8 223.0,56.0 223.9,61.0 226.9,62.9"/><polygon points="162.9,56.1 160.0,57.9 159.0,63.0 162.0,61.0"/><polygon points="237.2,44.4 233.0,42.2 228.4,45.0 231.9,47.0"/><polygon points="152.8,42.3 148.7,44.4 154.0,47.0 157.5,45.1"/><polygon points="246.1,47.5 242.0,44.8 237.2,44.4 240.8,46.7"/><polygon points="143.9,44.9 139.8,47.5 145.1,46.8 148.7,44.4"/><polygon points="227.8,51.9 224.7,50.1 223.0,56.0 226.0,57.8"/><polygon points="161.2,50.2 158.1,52.0 160.0,57.9 162.9,56.1"/><polygon points="231.9,47.0 228.4,45.0 224.7,50.1 227.8,51.9"/><polygon points="157.5,45.1 154.0,47.0 158.1,52.0 161.2,50.2"/><polygon points="228.4,59.8 226.0,57.8 226.9,62.9 229.5,65.1"/><polygon points="160.0,57.9 157.5,59.9 156.5,65.2 159.0,63.0"/><polygon points="240.8,46.7 237.2,44.4 231.9,47.0 235.0,49.1"/><polygon points="148.7,44.4 145.1,46.8 150.9,49.2 154.0,47.0"/><polygon points="230.5,54.0 227.8,51.9 226.0,57.8 228.4,59.8"/><polygon points="158.1,52.0 155.5,54.0 157.5,59.9 160.0,57.9"/><polygon points="235.0,49.1 231.9,47.0 227.8,51.9 230.5,54.0"/><polygon points="154.0,47.0 150.9,49.2 155.5,54.0 158.1,52.0"/><polygon points="230.4,62.0 228.4,59.8 229.5,65.1 231.5,67.4"/><polygon points="249.7,50.4 246.1,47.5 240.8,46.7 243.8,49.3"/><polygon points="157.5,59.9 155.5,62.1 154.4,67.5 156.5,65.2"/><polygon points="139.8,47.5 136.2,50.5 142.1,49.4 145.1,46.8"/><polygon points="256.6,57.8 253.4,54.3 249.7,50.4 252.5,53.6"/><polygon points="132.5,54.4 129.4,57.9 133.5,53.7 136.2,50.5"/><polygon points="232.6,56.1 230.5,54.0 228.4,59.8 230.4,62.0"/><polygon points="243.8,49.3 240.8,46.7 235.0,49.1 237.5,51.5"/><polygon points="155.5,54.0 153.3,56.2 155.5,62.1 157.5,59.9"/><polygon points="145.1,46.8 142.1,49.4 148.4,51.5 150.9,49.2"/><polygon points="237.5,51.5 235.0,49.1 230.5,54.0 232.6,56.1"/><polygon points="150.9,49.2 148.4,51.5 153.3,56.2 155.5,54.0"/><polygon points="231.9,64.4 230.4,62.0 231.5,67.4 233.0,69.9"/><polygon points="155.5,62.1 154.1,64.4 152.9,70.0 154.4,67.5"/><polygon points="252.5,53.6 249.7,50.4 243.8,49.3 246.2,52.2"/><polygon points="136.2,50.5 133.5,53.7 139.8,52.3 142.1,49.4"/><polygon points="234.2,58.5 232.6,56.1 230.4,62.0 231.9,64.4"/><polygon points="153.3,56.2 151.8,58.6 154.1,64.4 155.5,62.1"/><polygon points="246.2,52.2 243.8,49.3 237.5,51.5 239.4,54.0"/><polygon points="142.1,49.4 139.8,52.3 146.5,54.1 148.4,51.5"/><polygon points="232.7,66.8 231.9,64.4 233.0,69.9 233.9,72.6"/><polygon points="239.4,54.0 237.5,51.5 232.6,56.1 234.2,58.5"/><polygon points="154.1,64.4 153.3,66.9 152.1,72.7 152.9,70.0"/><polygon points="148.4,51.5 146.5,54.1 151.8,58.6 153.3,56.2"/><polygon points="258.8,61.6 256.6,57.8 252.5,53.6 254.4,57.0"/><polygon points="129.4,57.9 127.2,61.8 131.5,57.1 133.5,53.7"/><polygon points="235.1,60.9 234.2,58.5 231.9,64.4 232.7,66.8"/><polygon points="151.8,58.6 150.9,61.0 153.3,66.9 154.1,64.4"/><polygon points="254.4,57.0 252.5,53.6 246.2,52.2 247.7,55.2"/><polygon points="133.5,53.7 131.5,57.1 138.2,55.3 139.8,52.3"/><polygon points="240.6,56.7 239.4,54.0 234.2,58.5 235.1,60.9"/><polygon points="146.5,54.1 145.4,56.7 150.9,61.0 151.8,58.6"/><polygon points="247.7,55.2 246.2,52.2 239.4,54.0 240.6,56.7"/><polygon points="139.8,52.3 138.2,55.3 145.4,56.7 146.5,54.1"/><polygon points="260.0,65.7 258.8,61.6 254.4,57.0 255.4,60.7"/><polygon points="235.3,63.5 235.1,60.9 232.7,66.8 232.9,69.3"/><polygon points="150.9,61.0 150.7,63.6 153.1,69.4 153.3,66.9"/><polygon points="127.2,61.8 126.0,65.8 130.6,60.8 131.5,57.1"/><polygon points="255.4,60.7 254.4,57.0 247.7,55.2 248.4,58.4"/><polygon points="241.0,59.4 240.6,56.7 235.1,60.9 235.3,63.5"/><polygon points="145.4,56.7 145.0,59.5 150.7,63.6 150.9,61.0"/><polygon points="131.5,57.1 130.6,60.8 137.6,58.5 138.2,55.3"/><polygon points="248.4,58.4 247.7,55.2 240.6,56.7 241.0,59.4"/><polygon points="138.2,55.3 137.6,58.5 145.0,59.5 145.4,56.7"/><polygon points="261.0,76.5 260.9,72.0 260.0,65.7 260.0,70.0"/><polygon points="125.1,72.1 125.0,76.6 126.0,70.1 126.0,65.8"/><polygon points="234.8,66.1 235.3,63.5 232.9,69.3 232.3,71.9"/><polygon points="150.7,63.6 151.2,66.2 153.7,72.0 153.1,69.4"/><polygon points="260.0,70.0 260.0,65.7 255.4,60.7 255.3,64.5"/><polygon points="126.0,65.8 126.0,70.1 130.7,64.6 130.6,60.8"/><polygon points="240.6,62.3 241.0,59.4 235.3,63.5 234.8,66.1"/><polygon points="145.0,59.5 145.5,62.4 151.2,66.2 150.7,63.6"/><polygon points="255.3,64.5 255.4,60.7 248.4,58.4 248.1,61.6"/><polygon points="248.1,61.6 248.4,58.4 241.0,59.4 240.6,62.3"/><polygon points="130.6,60.8 130.7,64.6 137.9,61.7 137.6,58.5"/><polygon points="137.6,58.5 137.9,61.7 145.5,62.4 145.0,59.5"/><polygon points="259.7,81.2 261.0,76.5 260.0,70.0 258.8,74.3"/><polygon points="125.0,76.6 126.3,81.3 127.3,74.5 126.0,70.1"/><polygon points="239.2,65.2 240.6,62.3 234.8,66.1 233.5,68.7"/><polygon points="145.5,62.4 146.9,65.3 152.6,68.8 151.2,66.2"/><polygon points="258.8,74.3 260.0,70.0 255.3,64.5 254.0,68.3"/><polygon points="126.0,70.1 127.3,74.5 132.1,68.4 130.7,64.6"/><polygon points="246.7,65.0 248.1,61.6 240.6,62.3 239.2,65.2"/><polygon points="137.9,61.7 139.3,65.1 146.9,65.3 145.5,62.4"/><polygon points="254.0,68.3 255.3,64.5 248.1,61.6 246.7,65.0"/><polygon points="254.1,91.5 256.7,86.9 259.7,81.2 257.1,85.9"/><polygon points="130.7,64.6 132.1,68.4 139.3,65.1 137.9,61.7"/><polygon points="129.4,87.0 132.0,91.7 129.0,86.0 126.3,81.3"/><polygon points="236.9,68.0 239.2,65.2 233.5,68.7 231.3,71.3"/><polygon points="146.9,65.3 149.2,68.1 154.7,71.3 152.6,68.8"/><polygon points="257.1,85.9 259.7,81.2 258.8,74.3 256.1,78.7"/><polygon points="126.3,81.3 129.0,86.0 130.0,78.9 127.3,74.5"/><polygon points="244.2,68.3 246.7,65.0 239.2,65.2 236.9,68.0"/><polygon points="139.3,65.1 141.9,68.4 149.2,68.1 146.9,65.3"/><polygon points="256.1,78.7 258.8,74.3 254.0,68.3 251.4,72.2"/><polygon points="127.3,74.5 130.0,78.9 134.7,72.3 132.1,68.4"/><polygon points="251.4,72.2 254.0,68.3 246.7,65.0 244.2,68.3"/><polygon points="132.1,68.4 134.7,72.3 141.9,68.4 139.3,65.1"/><polygon points="233.6,70.7 236.9,68.0 231.3,71.3 228.4,73.7"/><polygon points="149.2,68.1 152.5,70.8 157.7,73.8 154.7,71.3"/><polygon points="250.0,96.1 254.1,91.5 257.1,85.9 252.9,90.5"/><polygon points="132.0,91.7 136.2,96.2 133.2,90.6 129.0,86.0"/><polygon points="240.6,71.5 244.2,68.3 236.9,68.0 233.6,70.7"/><polygon points="141.9,68.4 145.6,71.6 152.5,70.8 149.2,68.1"/><polygon points="252.9,90.5 257.1,85.9 256.1,78.7 252.0,83.0"/><polygon points="129.0,86.0 133.2,90.6 134.1,83.2 130.0,78.9"/><polygon points="229.3,73.3 233.6,70.7 228.4,73.7 224.6,76.0"/><polygon points="152.5,70.8 156.8,73.3 161.5,76.0 157.7,73.8"/><polygon points="247.4,76.0 251.4,72.2 244.2,68.3 240.6,71.5"/><polygon points="252.0,83.0 256.1,78.7 251.4,72.2 247.4,76.0"/><polygon points="134.7,72.3 138.7,76.1 145.6,71.6 141.9,68.4"/><polygon points="130.0,78.9 134.1,83.2 138.7,76.1 134.7,72.3"/><polygon points="244.5,100.4 250.0,96.1 252.9,90.5 247.2,94.9"/><polygon points="136.2,96.2 141.7,100.6 139.0,95.0 133.2,90.6"/><polygon points="235.8,74.5 240.6,71.5 233.6,70.7 229.3,73.3"/><polygon points="145.6,71.6 150.4,74.5 156.8,73.3 152.5,70.8"/><polygon points="247.2,94.9 252.9,90.5 252.0,83.0 246.3,87.1"/><polygon points="133.2,90.6 139.0,95.0 139.9,87.2 134.1,83.2"/><polygon points="242.1,79.5 247.4,76.0 240.6,71.5 235.8,74.5"/><polygon points="138.7,76.1 144.1,79.6 150.4,74.5 145.6,71.6"/><polygon points="246.3,87.1 252.0,83.0 247.4,76.0 242.1,79.5"/><polygon points="134.1,83.2 139.9,87.2 144.1,79.6 138.7,76.1"/><polygon points="237.5,104.4 244.5,100.4 247.2,94.9 239.9,98.9"/><polygon points="141.7,100.6 148.7,104.5 146.3,99.0 139.0,95.0"/><polygon points="229.8,77.2 235.8,74.5 229.3,73.3 224.2,75.5"/><polygon points="150.4,74.5 156.4,77.2 162.0,75.6 156.8,73.3"/><polygon points="216.9,111.4 225.4,109.0 229.2,107.8 219.8,110.5"/><polygon points="160.9,109.1 169.4,111.5 166.5,110.5 157.0,107.8"/><polygon points="239.9,98.9 247.2,94.9 246.3,87.1 239.2,90.8"/><polygon points="139.0,95.0 146.3,99.0 147.1,90.9 139.9,87.2"/><polygon points="235.4,82.8 242.1,79.5 235.8,74.5 229.8,77.2"/><polygon points="144.1,79.6 150.8,82.9 156.4,77.2 150.4,74.5"/><polygon points="222.9,79.5 229.8,77.2 224.2,75.5 218.2,77.4"/><polygon points="156.4,77.2 163.4,79.5 168.0,77.5 162.0,75.6"/><polygon points="229.2,107.8 237.5,104.4 239.9,98.9 231.3,102.3"/><polygon points="148.7,104.5 157.0,107.8 155.0,102.4 146.3,99.0"/><polygon points="239.2,90.8 246.3,87.1 242.1,79.5 235.4,82.8"/><polygon points="139.9,87.2 147.1,90.9 150.8,82.9 144.1,79.6"/><polygon points="207.7,113.1 216.9,111.4 219.8,110.5 209.5,112.3"/><polygon points="169.4,111.5 178.6,113.1 176.8,112.4 166.5,110.5"/><polygon points="215.0,81.3 222.9,79.5 218.2,77.4 211.6,79.0"/><polygon points="163.4,79.5 171.2,81.3 174.6,79.0 168.0,77.5"/><polygon points="198.1,114.0 207.7,113.1 209.5,112.3 198.7,113.3"/><polygon points="178.6,113.1 188.2,114.0 187.6,113.3 176.8,112.4"/><polygon points="227.5,85.5 235.4,82.8 229.8,77.2 222.9,79.5"/><polygon points="150.8,82.9 158.8,85.6 163.4,79.5 156.4,77.2"/><polygon points="188.2,114.0 198.1,114.0 198.7,113.3 187.6,113.3"/><polygon points="231.3,102.3 239.9,98.9 239.2,90.8 230.6,94.0"/><polygon points="146.3,99.0 155.0,102.4 155.7,94.1 147.1,90.9"/><polygon points="219.8,110.5 229.2,107.8 231.3,102.3 221.4,105.1"/><polygon points="157.0,107.8 166.5,110.5 165.0,105.1 155.0,102.4"/><polygon points="206.6,82.6 215.0,81.3 211.6,79.0 204.4,80.0"/><polygon points="171.2,81.3 179.7,82.6 181.8,80.0 174.6,79.0"/><polygon points="230.6,94.0 239.2,90.8 235.4,82.8 227.5,85.5"/><polygon points="147.1,90.9 155.7,94.1 158.8,85.6 150.8,82.9"/><polygon points="197.7,83.2 206.6,82.6 204.4,80.0 196.9,80.5"/><polygon points="179.7,82.6 188.6,83.2 189.3,80.6 181.8,80.0"/><polygon points="188.6,83.2 197.7,83.2 196.9,80.5 189.3,80.6"/><polygon points="218.5,87.7 227.5,85.5 222.9,79.5 215.0,81.3"/><polygon points="158.8,85.6 167.8,87.8 171.2,81.3 163.4,79.5"/><polygon points="209.5,112.3 219.8,110.5 221.4,105.1 210.5,107.0"/><polygon points="166.5,110.5 176.8,112.4 175.9,107.0 165.0,105.1"/><polygon points="221.4,105.1 231.3,102.3 230.6,94.0 220.9,96.6"/><polygon points="155.0,102.4 165.0,105.1 165.4,96.7 155.7,94.1"/><polygon points="198.7,113.3 209.5,112.3 210.5,107.0 199.0,108.0"/><polygon points="176.8,112.4 187.6,113.3 187.3,108.0 175.9,107.0"/><polygon points="220.9,96.6 230.6,94.0 227.5,85.5 218.5,87.7"/><polygon points="155.7,94.1 165.4,96.7 167.8,87.8 158.8,85.6"/><polygon points="208.7,89.3 218.5,87.7 215.0,81.3 206.6,82.6"/><polygon points="187.6,113.3 198.7,113.3 199.0,108.0 187.3,108.0"/><polygon points="167.8,87.8 177.6,89.3 179.7,82.6 171.2,81.3"/><polygon points="210.5,107.0 221.4,105.1 220.9,96.6 210.2,98.4"/><polygon points="165.0,105.1 175.9,107.0 176.1,98.4 165.4,96.7"/><polygon points="198.4,90.1 208.7,89.3 206.6,82.6 197.7,83.2"/><polygon points="177.6,89.3 187.9,90.1 188.6,83.2 179.7,82.6"/><polygon points="187.9,90.1 198.4,90.1 197.7,83.2 188.6,83.2"/><polygon points="210.2,98.4 220.9,96.6 218.5,87.7 208.7,89.3"/><polygon points="165.4,96.7 176.1,98.4 177.6,89.3 167.8,87.8"/><polygon points="199.0,108.0 210.5,107.0 210.2,98.4 198.9,99.3"/><polygon points="175.9,107.0 187.3,108.0 187.4,99.3 176.1,98.4"/><polygon points="187.3,108.0 199.0,108.0 198.9,99.3 187.4,99.3"/><polygon points="198.9,99.3 210.2,98.4 208.7,89.3 198.4,90.1"/><polygon points="176.1,98.4 187.4,99.3 187.9,90.1 177.6,89.3"/><polygon points="187.4,99.3 198.9,99.3 198.4,90.1 187.9,90.1"/></g><polygon points="196.1,34.3 189.7,34.3 190.0,34.8 195.8,34.8" fill="#6b6b76" stroke="#6b6b76" stroke-width="0.45" stroke-linejoin="round"/><polygon points="202.4,34.5 196.1,34.3 195.8,34.8 201.6,35.0" fill="#6a6a76" stroke="#6a6a76" stroke-width="0.45" stroke-linejoin="round"/><polygon points="189.7,34.3 183.4,34.6 184.2,35.1 190.0,34.8" fill="#6c6c77" stroke="#6c6c77" stroke-width="0.45" stroke-linejoin="round"/><polygon points="208.7,35.1 202.4,34.5 201.6,35.0 207.3,35.6" fill="#696a76" stroke="#696a76" stroke-width="0.45" stroke-linejoin="round"/><polygon points="183.4,34.6 177.1,35.1 178.5,35.6 184.2,35.1" fill="#6e6e78" stroke="#6e6e78" stroke-width="0.45" stroke-linejoin="round"/><polygon points="195.2,54.0 190.7,54.0 190.4,55.9 195.4,55.8" fill="#575a6c" stroke="#575a6c" stroke-width="0.45" stroke-linejoin="round"/><polygon points="214.9,36.0 208.7,35.1 207.3,35.6 212.9,36.4" fill="#696a76" stroke="#696a76" stroke-width="0.45" stroke-linejoin="round"/><polygon points="177.1,35.1 170.9,36.0 172.9,36.4 178.5,35.6" fill="#6f6f79" stroke="#6f6f79" stroke-width="0.45" stroke-linejoin="round"/><polygon points="199.7,54.2 195.2,54.0 195.4,55.8 200.4,56.1" fill="#56596a" stroke="#56596a" stroke-width="0.45" stroke-linejoin="round"/><polygon points="190.7,54.0 186.1,54.2 185.5,56.1 190.4,55.9" fill="#5d6073" stroke="#5d6073" stroke-width="0.45" stroke-linejoin="round"/><polygon points="204.2,54.7 199.7,54.2 200.4,56.1 205.2,56.7" fill="#585b6a" stroke="#585b6a" stroke-width="0.45" stroke-linejoin="round"/><polygon points="186.1,54.2 181.6,54.7 180.6,56.7 185.5,56.1" fill="#626679" stroke="#626679" stroke-width="0.45" stroke-linejoin="round"/><polygon points="208.6,55.5 204.2,54.7 205.2,56.7 210.0,57.5" fill="#585c6a" stroke="#585c6a" stroke-width="0.45" stroke-linejoin="round"/><polygon points="220.9,37.2 214.9,36.0 212.9,36.4 218.3,37.4" fill="#696a76" stroke="#696a76" stroke-width="0.45" stroke-linejoin="round"/><polygon points="181.6,54.7 177.3,55.5 175.9,57.6 180.6,56.7" fill="#686b80" stroke="#686b80" stroke-width="0.45" stroke-linejoin="round"/><polygon points="170.9,36.0 164.9,37.2 167.5,37.5 172.9,36.4" fill="#71717b" stroke="#71717b" stroke-width="0.45" stroke-linejoin="round"/><polygon points="195.8,34.8 190.0,34.8 190.3,38.2 195.5,38.2" fill="#90909b" stroke="#90909b" stroke-width="0.45" stroke-linejoin="round"/><polygon points="201.6,35.0 195.8,34.8 195.5,38.2 200.7,38.4" fill="#91919c" stroke="#91919c" stroke-width="0.45" stroke-linejoin="round"/><polygon points="190.0,34.8 184.2,35.1 185.2,38.4 190.3,38.2" fill="#8f8f9b" stroke="#8f8f9b" stroke-width="0.45" stroke-linejoin="round"/><polygon points="212.8,56.5 208.6,55.5 210.0,57.5 214.6,58.7" fill="#595c69" stroke="#595c69" stroke-width="0.45" stroke-linejoin="round"/><polygon points="177.3,55.5 173.1,56.5 171.3,58.7 175.9,57.6" fill="#6d7086" stroke="#6d7086" stroke-width="0.45" stroke-linejoin="round"/><polygon points="207.3,35.6 201.6,35.0 200.7,38.4 205.8,38.9" fill="#91919c" stroke="#91919c" stroke-width="0.45" stroke-linejoin="round"/><polygon points="184.2,35.1 178.5,35.6 180.1,38.9 185.2,38.4" fill="#8e8e9a" stroke="#8e8e9a" stroke-width="0.45" stroke-linejoin="round"/><polygon points="195.2,49.5 190.7,49.5 190.7,54.0 195.2,54.0" fill="#4f4f55" stroke="#4f4f55" stroke-width="0.45" stroke-linejoin="round"/><polygon points="226.6,38.6 220.9,37.2 218.3,37.4 223.5,38.8" fill="#6a6a77" stroke="#6a6a77" stroke-width="0.45" stroke-linejoin="round"/><polygon points="164.9,37.2 159.2,38.7 162.3,38.8 167.5,37.5" fill="#73747c" stroke="#73747c" stroke-width="0.45" stroke-linejoin="round"/><polygon points="199.6,49.7 195.2,49.5 195.2,54.0 199.7,54.2" fill="#525357" stroke="#525357" stroke-width="0.45" stroke-linejoin="round"/><polygon points="190.7,49.5 186.3,49.7 186.1,54.2 190.7,54.0" fill="#4b4b52" stroke="#4b4b52" stroke-width="0.45" stroke-linejoin="round"/><polygon points="212.9,36.4 207.3,35.6 205.8,38.9 210.7,39.7" fill="#91929b" stroke="#91929b" stroke-width="0.45" stroke-linejoin="round"/><polygon points="178.5,35.6 172.9,36.4 175.1,39.7 180.1,38.9" fill="#8c8c99" stroke="#8c8c99" stroke-width="0.45" stroke-linejoin="round"/><polygon points="203.9,50.2 199.6,49.7 199.7,54.2 204.2,54.7" fill="#545558" stroke="#545558" stroke-width="0.45" stroke-linejoin="round"/><polygon points="186.3,49.7 181.9,50.2 181.6,54.7 186.1,54.2" fill="#474650" stroke="#474650" stroke-width="0.45" stroke-linejoin="round"/><polygon points="216.8,57.7 212.8,56.5 214.6,58.7 219.0,60.1" fill="#585b67" stroke="#585b67" stroke-width="0.45" stroke-linejoin="round"/><polygon points="173.1,56.5 169.1,57.8 166.9,60.1 171.3,58.7" fill="#71758c" stroke="#71758c" stroke-width="0.45" stroke-linejoin="round"/><polygon points="195.5,38.2 190.3,38.2 190.6,43.6 195.3,43.6" fill="#999aa2" stroke="#999aa2" stroke-width="0.45" stroke-linejoin="round"/><polygon points="200.7,38.4 195.5,38.2 195.3,43.6 199.9,43.9" fill="#a0a0a7" stroke="#a0a0a7" stroke-width="0.45" stroke-linejoin="round"/><polygon points="190.3,38.2 185.2,38.4 185.9,43.9 190.6,43.6" fill="#93949d" stroke="#93949d" stroke-width="0.45" stroke-linejoin="round"/><polygon points="208.2,50.9 203.9,50.2 204.2,54.7 208.6,55.5" fill="#565658" stroke="#565658" stroke-width="0.45" stroke-linejoin="round"/><polygon points="181.9,50.2 177.7,50.9 177.3,55.5 181.6,54.7" fill="#484754" stroke="#484754" stroke-width="0.45" stroke-linejoin="round"/><polygon points="218.3,37.4 212.9,36.4 210.7,39.7 215.5,40.6" fill="#91919b" stroke="#91919b" stroke-width="0.45" stroke-linejoin="round"/><polygon points="195.3,43.6 190.6,43.6 190.7,49.5 195.2,49.5" fill="#69696c" stroke="#69696c" stroke-width="0.45" stroke-linejoin="round"/><polygon points="172.9,36.4 167.5,37.5 170.3,40.7 175.1,39.7" fill="#8a8b97" stroke="#8a8b97" stroke-width="0.45" stroke-linejoin="round"/><polygon points="199.9,43.9 195.3,43.6 195.2,49.5 199.6,49.7" fill="#707071" stroke="#707071" stroke-width="0.45" stroke-linejoin="round"/><polygon points="190.6,43.6 185.9,43.9 186.3,49.7 190.7,49.5" fill="#626266" stroke="#626266" stroke-width="0.45" stroke-linejoin="round"/><polygon points="205.8,38.9 200.7,38.4 199.9,43.9 204.5,44.3" fill="#a5a5ab" stroke="#a5a5ab" stroke-width="0.45" stroke-linejoin="round"/><polygon points="185.2,38.4 180.1,38.9 181.4,44.4 185.9,43.9" fill="#8f8f99" stroke="#8f8f99" stroke-width="0.45" stroke-linejoin="round"/><polygon points="232.1,40.4 226.6,38.6 223.5,38.8 228.5,40.4" fill="#6b6b78" stroke="#6b6b78" stroke-width="0.45" stroke-linejoin="round"/><polygon points="204.5,44.3 199.9,43.9 199.6,49.7 203.9,50.2" fill="#787878" stroke="#787878" stroke-width="0.45" stroke-linejoin="round"/><polygon points="185.9,43.9 181.4,44.4 181.9,50.2 186.3,49.7" fill="#5b5b61" stroke="#5b5b61" stroke-width="0.45" stroke-linejoin="round"/><polygon points="159.2,38.7 153.7,40.4 157.4,40.4 162.3,38.8" fill="#76767e" stroke="#76767e" stroke-width="0.45" stroke-linejoin="round"/><polygon points="212.3,51.8 208.2,50.9 208.6,55.5 212.8,56.5" fill="#565656" stroke="#565656" stroke-width="0.45" stroke-linejoin="round"/><polygon points="220.5,59.2 216.8,57.7 219.0,60.1 223.1,61.7" fill="#565964" stroke="#565964" stroke-width="0.45" stroke-linejoin="round"/><polygon points="177.7,50.9 173.6,51.9 173.1,56.5 177.3,55.5" fill="#4f4f5e" stroke="#4f4f5e" stroke-width="0.45" stroke-linejoin="round"/><polygon points="169.1,57.8 165.4,59.3 162.8,61.8 166.9,60.1" fill="#757a91" stroke="#757a91" stroke-width="0.45" stroke-linejoin="round"/><polygon points="210.7,39.7 205.8,38.9 204.5,44.3 209.0,45.0" fill="#a9a9ad" stroke="#a9a9ad" stroke-width="0.45" stroke-linejoin="round"/><polygon points="180.1,38.9 175.1,39.7 176.9,45.1 181.4,44.4" fill="#8b8b96" stroke="#8b8b96" stroke-width="0.45" stroke-linejoin="round"/><polygon points="209.0,45.0 204.5,44.3 203.9,50.2 208.2,50.9" fill="#838383" stroke="#838383" stroke-width="0.45" stroke-linejoin="round"/><polygon points="181.4,44.4 176.9,45.1 177.7,50.9 181.9,50.2" fill="#55555c" stroke="#55555c" stroke-width="0.45" stroke-linejoin="round"/><polygon points="223.5,38.8 218.3,37.4 215.5,40.6 220.1,41.9" fill="#91919a" stroke="#91919a" stroke-width="0.45" stroke-linejoin="round"/><polygon points="167.5,37.5 162.3,38.8 165.8,41.9 170.3,40.7" fill="#888895" stroke="#888895" stroke-width="0.45" stroke-linejoin="round"/><polygon points="215.5,40.6 210.7,39.7 209.0,45.0 213.3,46.0" fill="#a8a8ac" stroke="#a8a8ac" stroke-width="0.45" stroke-linejoin="round"/><polygon points="216.1,53.0 212.3,51.8 212.8,56.5 216.8,57.7" fill="#585858" stroke="#585858" stroke-width="0.45" stroke-linejoin="round"/><polygon points="175.1,39.7 170.3,40.7 172.6,46.0 176.9,45.1" fill="#868793" stroke="#868793" stroke-width="0.45" stroke-linejoin="round"/><polygon points="173.6,51.9 169.7,53.0 169.1,57.8 173.1,56.5" fill="#5c5c6e" stroke="#5c5c6e" stroke-width="0.45" stroke-linejoin="round"/><polygon points="213.3,46.0 209.0,45.0 208.2,50.9 212.3,51.8" fill="#8a8a8a" stroke="#8a8a8a" stroke-width="0.45" stroke-linejoin="round"/><polygon points="176.9,45.1 172.6,46.0 173.6,51.9 177.7,50.9" fill="#4e4e57" stroke="#4e4e57" stroke-width="0.45" stroke-linejoin="round"/><polygon points="223.9,61.0 220.5,59.2 223.1,61.7 226.8,63.7" fill="#535661" stroke="#535661" stroke-width="0.45" stroke-linejoin="round"/><polygon points="165.4,59.3 162.0,61.0 159.1,63.7 162.8,61.8" fill="#787e96" stroke="#787e96" stroke-width="0.45" stroke-linejoin="round"/><polygon points="237.3,42.4 232.1,40.4 228.5,40.4 233.0,42.2" fill="#6c6c7a" stroke="#6c6c7a" stroke-width="0.45" stroke-linejoin="round"/><polygon points="153.7,40.4 148.6,42.5 152.8,42.3 157.4,40.4" fill="#787881" stroke="#787881" stroke-width="0.45" stroke-linejoin="round"/><polygon points="228.5,40.4 223.5,38.8 220.1,41.9 224.4,43.3" fill="#909098" stroke="#909098" stroke-width="0.45" stroke-linejoin="round"/><polygon points="220.1,41.9 215.5,40.6 213.3,46.0 217.4,47.1" fill="#a4a4a7" stroke="#a4a4a7" stroke-width="0.45" stroke-linejoin="round"/><polygon points="162.3,38.8 157.4,40.4 161.5,43.4 165.8,41.9" fill="#868693" stroke="#868693" stroke-width="0.45" stroke-linejoin="round"/><polygon points="170.3,40.7 165.8,41.9 168.5,47.2 172.6,46.0" fill="#81818f" stroke="#81818f" stroke-width="0.45" stroke-linejoin="round"/><polygon points="219.7,54.4 216.1,53.0 216.8,57.7 220.5,59.2" fill="#5c5c5c" stroke="#5c5c5c" stroke-width="0.45" stroke-linejoin="round"/><polygon points="217.4,47.1 213.3,46.0 212.3,51.8 216.1,53.0" fill="#8c8c8c" stroke="#8c8c8c" stroke-width="0.45" stroke-linejoin="round"/><polygon points="169.7,53.0 166.1,54.4 165.4,59.3 169.1,57.8" fill="#66687c" stroke="#66687c" stroke-width="0.45" stroke-linejoin="round"/><polygon points="172.6,46.0 168.5,47.2 169.7,53.0 173.6,51.9" fill="#484954" stroke="#484954" stroke-width="0.45" stroke-linejoin="round"/><polygon points="226.9,62.9 223.9,61.0 226.8,63.7 230.2,65.9" fill="#50535d" stroke="#50535d" stroke-width="0.45" stroke-linejoin="round"/><polygon points="162.0,61.0 159.0,63.0 155.7,65.9 159.1,63.7" fill="#7b819a" stroke="#7b819a" stroke-width="0.45" stroke-linejoin="round"/><polygon points="224.4,43.3 220.1,41.9 217.4,47.1 221.2,48.5" fill="#9d9d9f" stroke="#9d9d9f" stroke-width="0.45" stroke-linejoin="round"/><polygon points="165.8,41.9 161.5,43.4 164.7,48.6 168.5,47.2" fill="#7b7b89" stroke="#7b7b89" stroke-width="0.45" stroke-linejoin="round"/><polygon points="221.2,48.5 217.4,47.1 216.1,53.0 219.7,54.4" fill="#8b8b8b" stroke="#8b8b8b" stroke-width="0.45" stroke-linejoin="round"/><polygon points="168.5,47.2 164.7,48.6 166.1,54.4 169.7,53.0" fill="#454653" stroke="#454653" stroke-width="0.45" stroke-linejoin="round"/><polygon points="223.0,56.0 219.7,54.4 220.5,59.2 223.9,61.0" fill="#5d5d5d" stroke="#5d5d5d" stroke-width="0.45" stroke-linejoin="round"/><polygon points="166.1,54.4 162.9,56.1 162.0,61.0 165.4,59.3" fill="#707389" stroke="#707389" stroke-width="0.45" stroke-linejoin="round"/><polygon points="233.0,42.2 228.5,40.4 224.4,43.3 228.4,45.0" fill="#8e8f97" stroke="#8e8f97" stroke-width="0.45" stroke-linejoin="round"/><polygon points="157.4,40.4 152.8,42.3 157.5,45.1 161.5,43.4" fill="#838491" stroke="#838491" stroke-width="0.45" stroke-linejoin="round"/><polygon points="242.0,44.8 237.3,42.4 233.0,42.2 237.2,44.4" fill="#6d6d7b" stroke="#6d6d7b" stroke-width="0.45" stroke-linejoin="round"/><polygon points="148.6,42.5 143.9,44.9 148.7,44.4 152.8,42.3" fill="#7b7b83" stroke="#7b7b83" stroke-width="0.45" stroke-linejoin="round"/><polygon points="224.7,50.1 221.2,48.5 219.7,54.4 223.0,56.0" fill="#888888" stroke="#888888" stroke-width="0.45" stroke-linejoin="round"/><polygon points="164.7,48.6 161.2,50.2 162.9,56.1 166.1,54.4" fill="#4e4f5f" stroke="#4e4f5f" stroke-width="0.45" stroke-linejoin="round"/><polygon points="228.4,45.0 224.4,43.3 221.2,48.5 224.7,50.1" fill="#959596" stroke="#959596" stroke-width="0.45" stroke-linejoin="round"/><polygon points="229.5,65.1 226.9,62.9 230.2,65.9 233.1,68.3" fill="#4c4e58" stroke="#4c4e58" stroke-width="0.45" stroke-linejoin="round"/><polygon points="161.5,43.4 157.5,45.1 161.2,50.2 164.7,48.6" fill="#737382" stroke="#737382" stroke-width="0.45" stroke-linejoin="round"/><polygon points="159.0,63.0 156.5,65.2 152.8,68.4 155.7,65.9" fill="#7f859f" stroke="#7f859f" stroke-width="0.45" stroke-linejoin="round"/><polygon points="226.0,57.8 223.0,56.0 223.9,61.0 226.9,62.9" fill="#5c5c5c" stroke="#5c5c5c" stroke-width="0.45" stroke-linejoin="round"/><polygon points="162.9,56.1 160.0,57.9 159.0,63.0 162.0,61.0" fill="#787c94" stroke="#787c94" stroke-width="0.45" stroke-linejoin="round"/><polygon points="237.2,44.4 233.0,42.2 228.4,45.0 231.9,47.0" fill="#8d8d95" stroke="#8d8d95" stroke-width="0.45" stroke-linejoin="round"/><polygon points="152.8,42.3 148.7,44.4 154.0,47.0 157.5,45.1" fill="#81818f" stroke="#81818f" stroke-width="0.45" stroke-linejoin="round"/><polygon points="246.1,47.5 242.0,44.8 237.2,44.4 240.8,46.7" fill="#6f6f7d" stroke="#6f6f7d" stroke-width="0.45" stroke-linejoin="round"/><polygon points="143.9,44.9 139.8,47.5 145.1,46.8 148.7,44.4" fill="#7d7d85" stroke="#7d7d85" stroke-width="0.45" stroke-linejoin="round"/><polygon points="227.8,51.9 224.7,50.1 223.0,56.0 226.0,57.8" fill="#858585" stroke="#858585" stroke-width="0.45" stroke-linejoin="round"/><polygon points="161.2,50.2 158.1,52.0 160.0,57.9 162.9,56.1" fill="#565869" stroke="#565869" stroke-width="0.45" stroke-linejoin="round"/><polygon points="231.9,47.0 228.4,45.0 224.7,50.1 227.8,51.9" fill="#8d8d8d" stroke="#8d8d8d" stroke-width="0.45" stroke-linejoin="round"/><polygon points="157.5,45.1 154.0,47.0 158.1,52.0 161.2,50.2" fill="#6a6a7a" stroke="#6a6a7a" stroke-width="0.45" stroke-linejoin="round"/><polygon points="228.4,59.8 226.0,57.8 226.9,62.9 229.5,65.1" fill="#5a5a5a" stroke="#5a5a5a" stroke-width="0.45" stroke-linejoin="round"/><polygon points="160.0,57.9 157.5,59.9 156.5,65.2 159.0,63.0" fill="#7f839c" stroke="#7f839c" stroke-width="0.45" stroke-linejoin="round"/><polygon points="240.8,46.7 237.2,44.4 231.9,47.0 235.0,49.1" fill="#8b8b93" stroke="#8b8b93" stroke-width="0.45" stroke-linejoin="round"/><polygon points="148.7,44.4 145.1,46.8 150.9,49.2 154.0,47.0" fill="#7e7e8c" stroke="#7e7e8c" stroke-width="0.45" stroke-linejoin="round"/><polygon points="230.5,54.0 227.8,51.9 226.0,57.8 228.4,59.8" fill="#808080" stroke="#808080" stroke-width="0.45" stroke-linejoin="round"/><polygon points="158.1,52.0 155.5,54.0 157.5,59.9 160.0,57.9" fill="#5d5e71" stroke="#5d5e71" stroke-width="0.45" stroke-linejoin="round"/><polygon points="235.0,49.1 231.9,47.0 227.8,51.9 230.5,54.0" fill="#878787" stroke="#878787" stroke-width="0.45" stroke-linejoin="round"/><polygon points="154.0,47.0 150.9,49.2 155.5,54.0 158.1,52.0" fill="#606071" stroke="#606071" stroke-width="0.45" stroke-linejoin="round"/><polygon points="230.4,62.0 228.4,59.8 229.5,65.1 231.5,67.4" fill="#555555" stroke="#555555" stroke-width="0.45" stroke-linejoin="round"/><polygon points="249.7,50.4 246.1,47.5 240.8,46.7 243.8,49.3" fill="#71717f" stroke="#71717f" stroke-width="0.45" stroke-linejoin="round"/><polygon points="157.5,59.9 155.5,62.1 154.4,67.5 156.5,65.2" fill="#8388a3" stroke="#8388a3" stroke-width="0.45" stroke-linejoin="round"/><polygon points="139.8,47.5 136.2,50.5 142.1,49.4 145.1,46.8" fill="#808088" stroke="#808088" stroke-width="0.45" stroke-linejoin="round"/><polygon points="256.6,57.8 253.4,54.3 249.7,50.4 252.5,53.6" fill="#555566" stroke="#555566" stroke-width="0.45" stroke-linejoin="round"/><polygon points="132.5,54.4 129.4,57.9 133.5,53.7 136.2,50.5" fill="#6f6f6f" stroke="#6f6f6f" stroke-width="0.45" stroke-linejoin="round"/><polygon points="232.6,56.1 230.5,54.0 228.4,59.8 230.4,62.0" fill="#7b7b7b" stroke="#7b7b7b" stroke-width="0.45" stroke-linejoin="round"/><polygon points="243.8,49.3 240.8,46.7 235.0,49.1 237.5,51.5" fill="#898991" stroke="#898991" stroke-width="0.45" stroke-linejoin="round"/><polygon points="155.5,54.0 153.3,56.2 155.5,62.1 157.5,59.9" fill="#616377" stroke="#616377" stroke-width="0.45" stroke-linejoin="round"/><polygon points="145.1,46.8 142.1,49.4 148.4,51.5 150.9,49.2" fill="#7b7b89" stroke="#7b7b89" stroke-width="0.45" stroke-linejoin="round"/><polygon points="237.5,51.5 235.0,49.1 230.5,54.0 232.6,56.1" fill="#818181" stroke="#818181" stroke-width="0.45" stroke-linejoin="round"/><polygon points="150.9,49.2 148.4,51.5 153.3,56.2 155.5,54.0" fill="#575868" stroke="#575868" stroke-width="0.45" stroke-linejoin="round"/><polygon points="231.9,64.4 230.4,62.0 231.5,67.4 233.0,69.9" fill="#4f4f4f" stroke="#4f4f4f" stroke-width="0.45" stroke-linejoin="round"/><polygon points="155.5,62.1 154.1,64.4 152.9,70.0 154.4,67.5" fill="#878ba7" stroke="#878ba7" stroke-width="0.45" stroke-linejoin="round"/><polygon points="252.5,53.6 249.7,50.4 243.8,49.3 246.2,52.2" fill="#737382" stroke="#737382" stroke-width="0.45" stroke-linejoin="round"/><polygon points="136.2,50.5 133.5,53.7 139.8,52.3 142.1,49.4" fill="#82828a" stroke="#82828a" stroke-width="0.45" stroke-linejoin="round"/><polygon points="234.2,58.5 232.6,56.1 230.4,62.0 231.9,64.4" fill="#757575" stroke="#757575" stroke-width="0.45" stroke-linejoin="round"/><polygon points="153.3,56.2 151.8,58.6 154.1,64.4 155.5,62.1" fill="#64667a" stroke="#64667a" stroke-width="0.45" stroke-linejoin="round"/><polygon points="246.2,52.2 243.8,49.3 237.5,51.5 239.4,54.0" fill="#87878f" stroke="#87878f" stroke-width="0.45" stroke-linejoin="round"/><polygon points="142.1,49.4 139.8,52.3 146.5,54.1 148.4,51.5" fill="#787987" stroke="#787987" stroke-width="0.45" stroke-linejoin="round"/><polygon points="232.7,66.8 231.9,64.4 233.0,69.9 233.9,72.6" fill="#484848" stroke="#484848" stroke-width="0.45" stroke-linejoin="round"/><polygon points="239.4,54.0 237.5,51.5 232.6,56.1 234.2,58.5" fill="#7c7c7c" stroke="#7c7c7c" stroke-width="0.45" stroke-linejoin="round"/><polygon points="154.1,64.4 153.3,66.9 152.1,72.7 152.9,70.0" fill="#888ca8" stroke="#888ca8" stroke-width="0.45" stroke-linejoin="round"/><polygon points="148.4,51.5 146.5,54.1 151.8,58.6 153.3,56.2" fill="#575768" stroke="#575768" stroke-width="0.45" stroke-linejoin="round"/><polygon points="258.8,61.6 256.6,57.8 252.5,53.6 254.4,57.0" fill="#565667" stroke="#565667" stroke-width="0.45" stroke-linejoin="round"/><polygon points="129.4,57.9 127.2,61.8 131.5,57.1 133.5,53.7" fill="#767676" stroke="#767676" stroke-width="0.45" stroke-linejoin="round"/><polygon points="235.1,60.9 234.2,58.5 231.9,64.4 232.7,66.8" fill="#6d6d6d" stroke="#6d6d6d" stroke-width="0.45" stroke-linejoin="round"/><polygon points="151.8,58.6 150.9,61.0 153.3,66.9 154.1,64.4" fill="#65677c" stroke="#65677c" stroke-width="0.45" stroke-linejoin="round"/><polygon points="254.4,57.0 252.5,53.6 246.2,52.2 247.7,55.2" fill="#767684" stroke="#767684" stroke-width="0.45" stroke-linejoin="round"/><polygon points="133.5,53.7 131.5,57.1 138.2,55.3 139.8,52.3" fill="#85858c" stroke="#85858c" stroke-width="0.45" stroke-linejoin="round"/><polygon points="240.6,56.7 239.4,54.0 234.2,58.5 235.1,60.9" fill="#767676" stroke="#767676" stroke-width="0.45" stroke-linejoin="round"/><polygon points="146.5,54.1 145.4,56.7 150.9,61.0 151.8,58.6" fill="#565667" stroke="#565667" stroke-width="0.45" stroke-linejoin="round"/><polygon points="247.7,55.2 246.2,52.2 239.4,54.0 240.6,56.7" fill="#85858c" stroke="#85858c" stroke-width="0.45" stroke-linejoin="round"/><polygon points="139.8,52.3 138.2,55.3 145.4,56.7 146.5,54.1" fill="#767684" stroke="#767684" stroke-width="0.45" stroke-linejoin="round"/><polygon points="260.0,65.7 258.8,61.6 254.4,57.0 255.4,60.7" fill="#575768" stroke="#575768" stroke-width="0.45" stroke-linejoin="round"/><polygon points="235.3,63.5 235.1,60.9 232.7,66.8 232.9,69.3" fill="#646464" stroke="#646464" stroke-width="0.45" stroke-linejoin="round"/><polygon points="150.9,61.0 150.7,63.6 153.1,69.4 153.3,66.9" fill="#64667a" stroke="#64667a" stroke-width="0.45" stroke-linejoin="round"/><polygon points="127.2,61.8 126.0,65.8 130.6,60.8 131.5,57.1" fill="#7c7c7c" stroke="#7c7c7c" stroke-width="0.45" stroke-linejoin="round"/><polygon points="255.4,60.7 254.4,57.0 247.7,55.2 248.4,58.4" fill="#787987" stroke="#787987" stroke-width="0.45" stroke-linejoin="round"/><polygon points="241.0,59.4 240.6,56.7 235.1,60.9 235.3,63.5" fill="#6f6f6f" stroke="#6f6f6f" stroke-width="0.45" stroke-linejoin="round"/><polygon points="145.4,56.7 145.0,59.5 150.7,63.6 150.9,61.0" fill="#555566" stroke="#555566" stroke-width="0.45" stroke-linejoin="round"/><polygon points="131.5,57.1 130.6,60.8 137.6,58.5 138.2,55.3" fill="#87878f" stroke="#87878f" stroke-width="0.45" stroke-linejoin="round"/><polygon points="248.4,58.4 247.7,55.2 240.6,56.7 241.0,59.4" fill="#82828a" stroke="#82828a" stroke-width="0.45" stroke-linejoin="round"/><polygon points="138.2,55.3 137.6,58.5 145.0,59.5 145.4,56.7" fill="#737382" stroke="#737382" stroke-width="0.45" stroke-linejoin="round"/><polygon points="261.0,76.5 260.9,72.0 260.0,65.7 260.0,70.0" fill="#616377" stroke="#616377" stroke-width="0.45" stroke-linejoin="round"/><polygon points="125.1,72.1 125.0,76.6 126.0,70.1 126.0,65.8" fill="#7b7b7b" stroke="#7b7b7b" stroke-width="0.45" stroke-linejoin="round"/><polygon points="234.8,66.1 235.3,63.5 232.9,69.3 232.3,71.9" fill="#595959" stroke="#595959" stroke-width="0.45" stroke-linejoin="round"/><polygon points="150.7,63.6 151.2,66.2 153.7,72.0 153.1,69.4" fill="#626377" stroke="#626377" stroke-width="0.45" stroke-linejoin="round"/><polygon points="260.0,70.0 260.0,65.7 255.4,60.7 255.3,64.5" fill="#575868" stroke="#575868" stroke-width="0.45" stroke-linejoin="round"/><polygon points="126.0,65.8 126.0,70.1 130.7,64.6 130.6,60.8" fill="#818181" stroke="#818181" stroke-width="0.45" stroke-linejoin="round"/><polygon points="240.6,62.3 241.0,59.4 235.3,63.5 234.8,66.1" fill="#676767" stroke="#676767" stroke-width="0.45" stroke-linejoin="round"/><polygon points="145.0,59.5 145.5,62.4 151.2,66.2 150.7,63.6" fill="#535464" stroke="#535464" stroke-width="0.45" stroke-linejoin="round"/><polygon points="255.3,64.5 255.4,60.7 248.4,58.4 248.1,61.6" fill="#7b7b89" stroke="#7b7b89" stroke-width="0.45" stroke-linejoin="round"/><polygon points="248.1,61.6 248.4,58.4 241.0,59.4 240.6,62.3" fill="#808088" stroke="#808088" stroke-width="0.45" stroke-linejoin="round"/><polygon points="130.6,60.8 130.7,64.6 137.9,61.7 137.6,58.5" fill="#898991" stroke="#898991" stroke-width="0.45" stroke-linejoin="round"/><polygon points="137.6,58.5 137.9,61.7 145.5,62.4 145.0,59.5" fill="#71717f" stroke="#71717f" stroke-width="0.45" stroke-linejoin="round"/><polygon points="259.7,81.2 261.0,76.5 260.0,70.0 258.8,74.3" fill="#5d5e71" stroke="#5d5e71" stroke-width="0.45" stroke-linejoin="round"/><polygon points="125.0,76.6 126.3,81.3 127.3,74.5 126.0,70.1" fill="#808080" stroke="#808080" stroke-width="0.45" stroke-linejoin="round"/><polygon points="239.2,65.2 240.6,62.3 234.8,66.1 233.5,68.7" fill="#5e5e5e" stroke="#5e5e5e" stroke-width="0.45" stroke-linejoin="round"/><polygon points="145.5,62.4 146.9,65.3 152.6,68.8 151.2,66.2" fill="#515262" stroke="#515262" stroke-width="0.45" stroke-linejoin="round"/><polygon points="258.8,74.3 260.0,70.0 255.3,64.5 254.0,68.3" fill="#606071" stroke="#606071" stroke-width="0.45" stroke-linejoin="round"/><polygon points="126.0,70.1 127.3,74.5 132.1,68.4 130.7,64.6" fill="#878787" stroke="#878787" stroke-width="0.45" stroke-linejoin="round"/><polygon points="246.7,65.0 248.1,61.6 240.6,62.3 239.2,65.2" fill="#7d7d85" stroke="#7d7d85" stroke-width="0.45" stroke-linejoin="round"/><polygon points="137.9,61.7 139.3,65.1 146.9,65.3 145.5,62.4" fill="#6f6f7d" stroke="#6f6f7d" stroke-width="0.45" stroke-linejoin="round"/><polygon points="254.0,68.3 255.3,64.5 248.1,61.6 246.7,65.0" fill="#7e7e8c" stroke="#7e7e8c" stroke-width="0.45" stroke-linejoin="round"/><polygon points="254.1,91.5 256.7,86.9 259.7,81.2 257.1,85.9" fill="#787c94" stroke="#787c94" stroke-width="0.45" stroke-linejoin="round"/><polygon points="130.7,64.6 132.1,68.4 139.3,65.1 137.9,61.7" fill="#8b8b93" stroke="#8b8b93" stroke-width="0.45" stroke-linejoin="round"/><polygon points="129.4,87.0 132.0,91.7 129.0,86.0 126.3,81.3" fill="#5c5c5c" stroke="#5c5c5c" stroke-width="0.45" stroke-linejoin="round"/><polygon points="236.9,68.0 239.2,65.2 233.5,68.7 231.3,71.3" fill="#555556" stroke="#555556" stroke-width="0.45" stroke-linejoin="round"/><polygon points="146.9,65.3 149.2,68.1 154.7,71.3 152.6,68.8" fill="#4f4f5f" stroke="#4f4f5f" stroke-width="0.45" stroke-linejoin="round"/><polygon points="257.1,85.9 259.7,81.2 258.8,74.3 256.1,78.7" fill="#565869" stroke="#565869" stroke-width="0.45" stroke-linejoin="round"/><polygon points="126.3,81.3 129.0,86.0 130.0,78.9 127.3,74.5" fill="#858585" stroke="#858585" stroke-width="0.45" stroke-linejoin="round"/><polygon points="244.2,68.3 246.7,65.0 239.2,65.2 236.9,68.0" fill="#7b7b83" stroke="#7b7b83" stroke-width="0.45" stroke-linejoin="round"/><polygon points="139.3,65.1 141.9,68.4 149.2,68.1 146.9,65.3" fill="#6d6d7b" stroke="#6d6d7b" stroke-width="0.45" stroke-linejoin="round"/><polygon points="256.1,78.7 258.8,74.3 254.0,68.3 251.4,72.2" fill="#6a6a7a" stroke="#6a6a7a" stroke-width="0.45" stroke-linejoin="round"/><polygon points="127.3,74.5 130.0,78.9 134.7,72.3 132.1,68.4" fill="#8d8d8d" stroke="#8d8d8d" stroke-width="0.45" stroke-linejoin="round"/><polygon points="251.4,72.2 254.0,68.3 246.7,65.0 244.2,68.3" fill="#81818f" stroke="#81818f" stroke-width="0.45" stroke-linejoin="round"/><polygon points="132.1,68.4 134.7,72.3 141.9,68.4 139.3,65.1" fill="#8d8d95" stroke="#8d8d95" stroke-width="0.45" stroke-linejoin="round"/><polygon points="233.6,70.7 236.9,68.0 231.3,71.3 228.4,73.7" fill="#4f4f4f" stroke="#4f4f4f" stroke-width="0.45" stroke-linejoin="round"/><polygon points="149.2,68.1 152.5,70.8 157.7,73.8 154.7,71.3" fill="#4b4c5b" stroke="#4b4c5b" stroke-width="0.45" stroke-linejoin="round"/><polygon points="250.0,96.1 254.1,91.5 257.1,85.9 252.9,90.5" fill="#707389" stroke="#707389" stroke-width="0.45" stroke-linejoin="round"/><polygon points="132.0,91.7 136.2,96.2 133.2,90.6 129.0,86.0" fill="#5d5d5d" stroke="#5d5d5d" stroke-width="0.45" stroke-linejoin="round"/><polygon points="240.6,71.5 244.2,68.3 236.9,68.0 233.6,70.7" fill="#787881" stroke="#787881" stroke-width="0.45" stroke-linejoin="round"/><polygon points="141.9,68.4 145.6,71.6 152.5,70.8 149.2,68.1" fill="#6c6c7a" stroke="#6c6c7a" stroke-width="0.45" stroke-linejoin="round"/><polygon points="252.9,90.5 257.1,85.9 256.1,78.7 252.0,83.0" fill="#4e4f5f" stroke="#4e4f5f" stroke-width="0.45" stroke-linejoin="round"/><polygon points="129.0,86.0 133.2,90.6 134.1,83.2 130.0,78.9" fill="#888888" stroke="#888888" stroke-width="0.45" stroke-linejoin="round"/><polygon points="229.3,73.3 233.6,70.7 228.4,73.7 224.6,76.0" fill="#48484a" stroke="#48484a" stroke-width="0.45" stroke-linejoin="round"/><polygon points="152.5,70.8 156.8,73.3 161.5,76.0 157.7,73.8" fill="#474856" stroke="#474856" stroke-width="0.45" stroke-linejoin="round"/><polygon points="247.4,76.0 251.4,72.2 244.2,68.3 240.6,71.5" fill="#838491" stroke="#838491" stroke-width="0.45" stroke-linejoin="round"/><polygon points="252.0,83.0 256.1,78.7 251.4,72.2 247.4,76.0" fill="#737382" stroke="#737382" stroke-width="0.45" stroke-linejoin="round"/><polygon points="134.7,72.3 138.7,76.1 145.6,71.6 141.9,68.4" fill="#8e8f97" stroke="#8e8f97" stroke-width="0.45" stroke-linejoin="round"/><polygon points="130.0,78.9 134.1,83.2 138.7,76.1 134.7,72.3" fill="#959596" stroke="#959596" stroke-width="0.45" stroke-linejoin="round"/><polygon points="244.5,100.4 250.0,96.1 252.9,90.5 247.2,94.9" fill="#66687c" stroke="#66687c" stroke-width="0.45" stroke-linejoin="round"/><polygon points="136.2,96.2 141.7,100.6 139.0,95.0 133.2,90.6" fill="#5c5c5c" stroke="#5c5c5c" stroke-width="0.45" stroke-linejoin="round"/><polygon points="235.8,74.5 240.6,71.5 233.6,70.7 229.3,73.3" fill="#76767e" stroke="#76767e" stroke-width="0.45" stroke-linejoin="round"/><polygon points="145.6,71.6 150.4,74.5 156.8,73.3 152.5,70.8" fill="#6b6b78" stroke="#6b6b78" stroke-width="0.45" stroke-linejoin="round"/><polygon points="247.2,94.9 252.9,90.5 252.0,83.0 246.3,87.1" fill="#454653" stroke="#454653" stroke-width="0.45" stroke-linejoin="round"/><polygon points="133.2,90.6 139.0,95.0 139.9,87.2 134.1,83.2" fill="#8b8b8b" stroke="#8b8b8b" stroke-width="0.45" stroke-linejoin="round"/><polygon points="242.1,79.5 247.4,76.0 240.6,71.5 235.8,74.5" fill="#868693" stroke="#868693" stroke-width="0.45" stroke-linejoin="round"/><polygon points="138.7,76.1 144.1,79.6 150.4,74.5 145.6,71.6" fill="#909098" stroke="#909098" stroke-width="0.45" stroke-linejoin="round"/><polygon points="246.3,87.1 252.0,83.0 247.4,76.0 242.1,79.5" fill="#7b7b89" stroke="#7b7b89" stroke-width="0.45" stroke-linejoin="round"/><polygon points="134.1,83.2 139.9,87.2 144.1,79.6 138.7,76.1" fill="#9d9d9f" stroke="#9d9d9f" stroke-width="0.45" stroke-linejoin="round"/><polygon points="237.5,104.4 244.5,100.4 247.2,94.9 239.9,98.9" fill="#5c5c6e" stroke="#5c5c6e" stroke-width="0.45" stroke-linejoin="round"/><polygon points="141.7,100.6 148.7,104.5 146.3,99.0 139.0,95.0" fill="#585858" stroke="#585858" stroke-width="0.45" stroke-linejoin="round"/><polygon points="229.8,77.2 235.8,74.5 229.3,73.3 224.2,75.5" fill="#73747c" stroke="#73747c" stroke-width="0.45" stroke-linejoin="round"/><polygon points="150.4,74.5 156.4,77.2 162.0,75.6 156.8,73.3" fill="#6a6a77" stroke="#6a6a77" stroke-width="0.45" stroke-linejoin="round"/><polygon points="216.9,111.4 225.4,109.0 229.2,107.8 219.8,110.5" fill="#686b80" stroke="#686b80" stroke-width="0.45" stroke-linejoin="round"/><polygon points="160.9,109.1 169.4,111.5 166.5,110.5 157.0,107.8" fill="#585c6a" stroke="#585c6a" stroke-width="0.45" stroke-linejoin="round"/><polygon points="239.9,98.9 247.2,94.9 246.3,87.1 239.2,90.8" fill="#484954" stroke="#484954" stroke-width="0.45" stroke-linejoin="round"/><polygon points="139.0,95.0 146.3,99.0 147.1,90.9 139.9,87.2" fill="#8c8c8c" stroke="#8c8c8c" stroke-width="0.45" stroke-linejoin="round"/><polygon points="235.4,82.8 242.1,79.5 235.8,74.5 229.8,77.2" fill="#888895" stroke="#888895" stroke-width="0.45" stroke-linejoin="round"/><polygon points="144.1,79.6 150.8,82.9 156.4,77.2 150.4,74.5" fill="#91919a" stroke="#91919a" stroke-width="0.45" stroke-linejoin="round"/><polygon points="222.9,79.5 229.8,77.2 224.2,75.5 218.2,77.4" fill="#71717b" stroke="#71717b" stroke-width="0.45" stroke-linejoin="round"/><polygon points="156.4,77.2 163.4,79.5 168.0,77.5 162.0,75.6" fill="#696a76" stroke="#696a76" stroke-width="0.45" stroke-linejoin="round"/><polygon points="229.2,107.8 237.5,104.4 239.9,98.9 231.3,102.3" fill="#4f4f5e" stroke="#4f4f5e" stroke-width="0.45" stroke-linejoin="round"/><polygon points="148.7,104.5 157.0,107.8 155.0,102.4 146.3,99.0" fill="#565656" stroke="#565656" stroke-width="0.45" stroke-linejoin="round"/><polygon points="239.2,90.8 246.3,87.1 242.1,79.5 235.4,82.8" fill="#81818f" stroke="#81818f" stroke-width="0.45" stroke-linejoin="round"/><polygon points="139.9,87.2 147.1,90.9 150.8,82.9 144.1,79.6" fill="#a4a4a7" stroke="#a4a4a7" stroke-width="0.45" stroke-linejoin="round"/><polygon points="207.7,113.1 216.9,111.4 219.8,110.5 209.5,112.3" fill="#626679" stroke="#626679" stroke-width="0.45" stroke-linejoin="round"/><polygon points="169.4,111.5 178.6,113.1 176.8,112.4 166.5,110.5" fill="#585b6a" stroke="#585b6a" stroke-width="0.45" stroke-linejoin="round"/><polygon points="215.0,81.3 222.9,79.5 218.2,77.4 211.6,79.0" fill="#6f6f79" stroke="#6f6f79" stroke-width="0.45" stroke-linejoin="round"/><polygon points="163.4,79.5 171.2,81.3 174.6,79.0 168.0,77.5" fill="#696a76" stroke="#696a76" stroke-width="0.45" stroke-linejoin="round"/><polygon points="198.1,114.0 207.7,113.1 209.5,112.3 198.7,113.3" fill="#5d6073" stroke="#5d6073" stroke-width="0.45" stroke-linejoin="round"/><polygon points="178.6,113.1 188.2,114.0 187.6,113.3 176.8,112.4" fill="#56596a" stroke="#56596a" stroke-width="0.45" stroke-linejoin="round"/><polygon points="227.5,85.5 235.4,82.8 229.8,77.2 222.9,79.5" fill="#8a8b97" stroke="#8a8b97" stroke-width="0.45" stroke-linejoin="round"/><polygon points="150.8,82.9 158.8,85.6 163.4,79.5 156.4,77.2" fill="#91919b" stroke="#91919b" stroke-width="0.45" stroke-linejoin="round"/><polygon points="188.2,114.0 198.1,114.0 198.7,113.3 187.6,113.3" fill="#575a6c" stroke="#575a6c" stroke-width="0.45" stroke-linejoin="round"/><polygon points="231.3,102.3 239.9,98.9 239.2,90.8 230.6,94.0" fill="#4e4e57" stroke="#4e4e57" stroke-width="0.45" stroke-linejoin="round"/><polygon points="146.3,99.0 155.0,102.4 155.7,94.1 147.1,90.9" fill="#8a8a8a" stroke="#8a8a8a" stroke-width="0.45" stroke-linejoin="round"/><polygon points="219.8,110.5 229.2,107.8 231.3,102.3 221.4,105.1" fill="#484754" stroke="#484754" stroke-width="0.45" stroke-linejoin="round"/><polygon points="157.0,107.8 166.5,110.5 165.0,105.1 155.0,102.4" fill="#565658" stroke="#565658" stroke-width="0.45" stroke-linejoin="round"/><polygon points="206.6,82.6 215.0,81.3 211.6,79.0 204.4,80.0" fill="#6e6e78" stroke="#6e6e78" stroke-width="0.45" stroke-linejoin="round"/><polygon points="171.2,81.3 179.7,82.6 181.8,80.0 174.6,79.0" fill="#696a76" stroke="#696a76" stroke-width="0.45" stroke-linejoin="round"/><polygon points="230.6,94.0 239.2,90.8 235.4,82.8 227.5,85.5" fill="#868793" stroke="#868793" stroke-width="0.45" stroke-linejoin="round"/><polygon points="147.1,90.9 155.7,94.1 158.8,85.6 150.8,82.9" fill="#a8a8ac" stroke="#a8a8ac" stroke-width="0.45" stroke-linejoin="round"/><polygon points="197.7,83.2 206.6,82.6 204.4,80.0 196.9,80.5" fill="#6c6c77" stroke="#6c6c77" stroke-width="0.45" stroke-linejoin="round"/><polygon points="179.7,82.6 188.6,83.2 189.3,80.6 181.8,80.0" fill="#6a6a76" stroke="#6a6a76" stroke-width="0.45" stroke-linejoin="round"/><polygon points="188.6,83.2 197.7,83.2 196.9,80.5 189.3,80.6" fill="#6b6b76" stroke="#6b6b76" stroke-width="0.45" stroke-linejoin="round"/><polygon points="218.5,87.7 227.5,85.5 222.9,79.5 215.0,81.3" fill="#8c8c99" stroke="#8c8c99" stroke-width="0.45" stroke-linejoin="round"/><polygon points="158.8,85.6 167.8,87.8 171.2,81.3 163.4,79.5" fill="#91929b" stroke="#91929b" stroke-width="0.45" stroke-linejoin="round"/><polygon points="209.5,112.3 219.8,110.5 221.4,105.1 210.5,107.0" fill="#474650" stroke="#474650" stroke-width="0.45" stroke-linejoin="round"/><polygon points="166.5,110.5 176.8,112.4 175.9,107.0 165.0,105.1" fill="#545558" stroke="#545558" stroke-width="0.45" stroke-linejoin="round"/><polygon points="221.4,105.1 231.3,102.3 230.6,94.0 220.9,96.6" fill="#55555c" stroke="#55555c" stroke-width="0.45" stroke-linejoin="round"/><polygon points="155.0,102.4 165.0,105.1 165.4,96.7 155.7,94.1" fill="#838383" stroke="#838383" stroke-width="0.45" stroke-linejoin="round"/><polygon points="198.7,113.3 209.5,112.3 210.5,107.0 199.0,108.0" fill="#4b4b52" stroke="#4b4b52" stroke-width="0.45" stroke-linejoin="round"/><polygon points="176.8,112.4 187.6,113.3 187.3,108.0 175.9,107.0" fill="#525357" stroke="#525357" stroke-width="0.45" stroke-linejoin="round"/><polygon points="220.9,96.6 230.6,94.0 227.5,85.5 218.5,87.7" fill="#8b8b96" stroke="#8b8b96" stroke-width="0.45" stroke-linejoin="round"/><polygon points="155.7,94.1 165.4,96.7 167.8,87.8 158.8,85.6" fill="#a9a9ad" stroke="#a9a9ad" stroke-width="0.45" stroke-linejoin="round"/><polygon points="208.7,89.3 218.5,87.7 215.0,81.3 206.6,82.6" fill="#8e8e9a" stroke="#8e8e9a" stroke-width="0.45" stroke-linejoin="round"/><polygon points="187.6,113.3 198.7,113.3 199.0,108.0 187.3,108.0" fill="#4f4f55" stroke="#4f4f55" stroke-width="0.45" stroke-linejoin="round"/><polygon points="167.8,87.8 177.6,89.3 179.7,82.6 171.2,81.3" fill="#91919c" stroke="#91919c" stroke-width="0.45" stroke-linejoin="round"/><polygon points="210.5,107.0 221.4,105.1 220.9,96.6 210.2,98.4" fill="#5b5b61" stroke="#5b5b61" stroke-width="0.45" stroke-linejoin="round"/><polygon points="165.0,105.1 175.9,107.0 176.1,98.4 165.4,96.7" fill="#787878" stroke="#787878" stroke-width="0.45" stroke-linejoin="round"/><polygon points="198.4,90.1 208.7,89.3 206.6,82.6 197.7,83.2" fill="#8f8f9b" stroke="#8f8f9b" stroke-width="0.45" stroke-linejoin="round"/><polygon points="177.6,89.3 187.9,90.1 188.6,83.2 179.7,82.6" fill="#91919c" stroke="#91919c" stroke-width="0.45" stroke-linejoin="round"/><polygon points="187.9,90.1 198.4,90.1 197.7,83.2 188.6,83.2" fill="#90909b" stroke="#90909b" stroke-width="0.45" stroke-linejoin="round"/><polygon points="210.2,98.4 220.9,96.6 218.5,87.7 208.7,89.3" fill="#8f8f99" stroke="#8f8f99" stroke-width="0.45" stroke-linejoin="round"/><polygon points="165.4,96.7 176.1,98.4 177.6,89.3 167.8,87.8" fill="#a5a5ab" stroke="#a5a5ab" stroke-width="0.45" stroke-linejoin="round"/><polygon points="199.0,108.0 210.5,107.0 210.2,98.4 198.9,99.3" fill="#626266" stroke="#626266" stroke-width="0.45" stroke-linejoin="round"/><polygon points="175.9,107.0 187.3,108.0 187.4,99.3 176.1,98.4" fill="#707071" stroke="#707071" stroke-width="0.45" stroke-linejoin="round"/><polygon points="187.3,108.0 199.0,108.0 198.9,99.3 187.4,99.3" fill="#69696c" stroke="#69696c" stroke-width="0.45" stroke-linejoin="round"/><polygon points="198.9,99.3 210.2,98.4 208.7,89.3 198.4,90.1" fill="#93949d" stroke="#93949d" stroke-width="0.45" stroke-linejoin="round"/><polygon points="176.1,98.4 187.4,99.3 187.9,90.1 177.6,89.3" fill="#a0a0a7" stroke="#a0a0a7" stroke-width="0.45" stroke-linejoin="round"/><polygon points="187.4,99.3 198.9,99.3 198.4,90.1 187.9,90.1" fill="#999aa2" stroke="#999aa2" stroke-width="0.45" stroke-linejoin="round"/><line x1="193" y1="66.1" x2="193" y2="26.6" stroke="#1a2fd0" stroke-width="1.2"/><polygon points="193.0,21.9 190.6,28.6 195.4,28.6" fill="#2a50ff"/><line x1="199.8" y1="56.6" x2="202" y2="53.5" stroke="#c02020" stroke-width="1.1"/><circle cx="203.4" cy="51.5" r="2.3" fill="#ff2020"/><line x1="193" y1="66.1" x2="160" y2="61.1" stroke="#20c020" stroke-width="1.1"/><polygon points="155.5,60.4 162.0,57.4 161.5,63.4" fill="#30ff30"/><circle cx="193" cy="66.1" r="7.6" fill="none" stroke="#f0f0f0" stroke-width="0.9"/><circle cx="193" cy="66.1" r="7.6" fill="none" stroke="#e03030" stroke-width="0.95" stroke-dasharray="3 3"/><path d="M183 66.1 H190 M196 66.1 H203 M193 56.1 V63.1 M193 69.1 V76.1" stroke="#000" stroke-width="0.9"/><circle cx="193" cy="66.1" r="1.3" fill="#f0a020"/><path d="M13.75 117.1 L21 109.6" stroke="#c03030" stroke-width="1.3"/><path d="M13.75 117.1 L1 115.4" stroke="#30c030" stroke-width="1.6"/><path d="M13.5 117.1 L13.5 107.1" stroke="#3030c0" stroke-width="1.6"/><path d="M13.5 107.1 L14.5 100.1" stroke="#3030a0" stroke-width="1" stroke-opacity="0.5"/></svg><div class="ui" style="left:11.50px;top:434.20px;color:#f0f0f0;font-size:7.7px;transform:scaleX(0.81)">User Persp</div><div class="ui" style="left:38.50px;top:547.80px;color:#f0f0f0;font-size:7.7px;">(86) Torus</div><div style="position:absolute;left:0.00px;top:560.60px;width:386.00px;height:15.40px;background:#727272"></div><div style="position:absolute;left:0.00px;top:560.60px;width:386.00px;height:0.80px;background:#7e7e7e"></div><div style="position:absolute;left:5.00px;top:562.30px;width:17.00px;height:12.20px;background:#4a4a4a;border-radius:2.5px;box-shadow:inset 0 0 0 0.6px #2e2e2e"></div><svg class="ab" style="left:7.20px;top:563.50px;" width="9.00" height="9.00" viewBox="0 0 9 9"><path d="M1.5 2.5 L4.8 1 L8 2.5 L8 6.8 L4.8 8.3 L1.5 6.8Z" fill="#f0f0f0"/><path d="M4.8 3.8 L8 2.5 L8 6.8 L4.8 8.3Z" fill="#b8b8b8"/></svg><svg class="ab" style="left:16.30px;top:563.90px;" width="4.40" height="9.00" viewBox="0 0 4.4 9"><path d="M0.3 3.8 L2.2 0.6 L4.1 3.8Z M0.3 5.2 L2.2 8.4 L4.1 5.2Z" fill="#d0d0d0" opacity="0.8"/></svg><div class="ui" style="left:28.00px;top:564.50px;color:#0d0d0d;font-size:7.7px;">View</div><div class="ui" style="left:54.00px;top:564.50px;color:#0d0d0d;font-size:7.7px;">Select</div><div class="ui" style="left:83.00px;top:564.50px;color:#0d0d0d;font-size:7.7px;">Add</div><div class="ui" style="left:106.00px;top:564.50px;color:#0d0d0d;font-size:7.7px;">Object</div><div style="position:absolute;left:133.00px;top:562.30px;width:66.25px;height:12.20px;background:#4a4a4a;border-radius:3px;box-shadow:inset 0 0 0 0.6px #2e2e2e"></div><svg class="ab" style="left:136.00px;top:563.80px;" width="9.00" height="9.00" viewBox="0 0 9 9"><path d="M1 2.6 L4.6 0.9 L8.2 2.6 L8.2 6.6 L4.6 8.4 L1 6.6Z" fill="#f0a040"/><path d="M4.6 4.2 L8.2 2.6 L8.2 6.6 L4.6 8.4Z" fill="#c06a20"/><path d="M1 2.6 L4.6 4.2 L8.2 2.6" stroke="#ffe0b0" stroke-width="0.5" fill="none"/></svg><div class="ui" style="left:146.00px;top:564.50px;color:#e8e8e8;font-size:7.7px;">Object Mode</div><svg class="ab" style="left:193.60px;top:563.90px;" width="4.40" height="9.00" viewBox="0 0 4.4 9"><path d="M0.3 3.8 L2.2 0.6 L4.1 3.8Z M0.3 5.2 L2.2 8.4 L4.1 5.2Z" fill="#d0d0d0" opacity="0.8"/></svg><div style="position:absolute;left:202.40px;top:562.30px;width:19.35px;height:12.20px;background:#4a4a4a;border-radius:3px;box-shadow:inset 0 0 0 0.6px #2e2e2e"></div><svg class="ab" style="left:205.00px;top:564.00px;" width="9.00" height="9.00" viewBox="0 0 9 9"><defs><radialGradient id="sph" cx="0.4" cy="0.35" r="0.7"><stop offset="0" stop-color="#fff"/><stop offset="1" stop-color="#9a9a9a"/></radialGradient></defs><circle cx="4.5" cy="4.5" r="3.6" fill="url(#sph)"/></svg><svg class="ab" style="left:216.10px;top:563.90px;" width="4.40" height="9.00" viewBox="0 0 4.4 9"><path d="M0.3 3.8 L2.2 0.6 L4.1 3.8Z M0.3 5.2 L2.2 8.4 L4.1 5.2Z" fill="#d0d0d0" opacity="0.8"/></svg><div style="position:absolute;left:225.50px;top:562.30px;width:19.40px;height:12.20px;background:#4a4a4a;border-radius:3px;box-shadow:inset 0 0 0 0.6px #2e2e2e"></div><svg class="ab" style="left:227.50px;top:563.80px;" width="10.00" height="9.00" viewBox="0 0 10 9"><circle cx="3" cy="3.5" r="2.2" fill="#cfd8f0"/><circle cx="6" cy="6.2" r="2.2" fill="#eef"/><circle cx="4.3" cy="4.8" r="1.3" fill="#5a78c8"/></svg><svg class="ab" style="left:239.20px;top:563.90px;" width="4.40" height="9.00" viewBox="0 0 4.4 9"><path d="M0.3 3.8 L2.2 0.6 L4.1 3.8Z M0.3 5.2 L2.2 8.4 L4.1 5.2Z" fill="#d0d0d0" opacity="0.8"/></svg><div style="position:absolute;left:246.00px;top:562.30px;width:12.50px;height:12.20px;background:#4a4a4a;border-radius:2px;box-shadow:inset 0 0 0 0.6px #2e2e2e"></div><svg class="ab" style="left:246.50px;top:563.50px;" width="11.00" height="10.00" viewBox="0 0 11 10"><path d="M1 5 H10 M1 5 L3 3.4 M1 5 L3 6.6 M10 5 L8 3.4 M10 5 L8 6.6" stroke="#f0f0f0" stroke-width="0.9" fill="none"/><path d="M2 1.5 H9" stroke="#ddd" stroke-width="0.5" stroke-dasharray="1 1"/></svg><div style="position:absolute;left:260.40px;top:562.30px;width:10.80px;height:12.20px;background:#5a76b8;box-shadow:inset 0 0 0 0.7px #2d3f70;border-radius:2.5px 0 0 2.5px"></div><svg class="ab" style="left:261.00px;top:563.30px;" width="10.00" height="10.00" viewBox="0 0 10 10"><path d="M5 1 V6.5 L1.5 8.8 M5 6.5 L8.5 8.8" stroke="#fff" stroke-width="0.9" fill="none"/><path d="M5 1 V6.5" stroke="#4a6ad0" stroke-width="0.9"/><path d="M5 6.5 L1.5 8.8" stroke="#d04040" stroke-width="0.9"/><path d="M5 6.5 L8.5 8.8" stroke="#40c040" stroke-width="0.9"/></svg><div style="position:absolute;left:271.20px;top:562.30px;width:10.80px;height:12.20px;background:#5a76b8;box-shadow:inset 0 0 0 0.7px #2d3f70"></div><svg class="ab" style="left:272.00px;top:563.30px;" width="10.00" height="10.00" viewBox="0 0 10 10"><path d="M1.5 8.5 L7.5 2.5" stroke="#d8e0ff" stroke-width="1"/><path d="M8.6 1.4 L5.4 2.4 L7.6 4.6Z" fill="#d8e0ff"/></svg><div style="position:absolute;left:282.00px;top:562.30px;width:11.50px;height:12.20px;background:#4a4a4a;border-radius:0px;box-shadow:inset 0 0 0 0.6px #2e2e2e"></div><svg class="ab" style="left:283.00px;top:563.30px;" width="10.00" height="10.00" viewBox="0 0 10 10"><path d="M2 8.5 Q2.5 3 8.5 2" stroke="#6a7bb0" stroke-width="1" fill="none"/></svg><div style="position:absolute;left:293.50px;top:562.30px;width:12.50px;height:12.20px;background:#4a4a4a;border-radius:0px;box-shadow:inset 0 0 0 0.6px #2e2e2e"></div><svg class="ab" style="left:294.50px;top:563.30px;" width="10.00" height="10.00" viewBox="0 0 10 10"><path d="M2 8.5 L6.5 4" stroke="#6a7bb0" stroke-width="1"/><rect x="6" y="1.5" width="3" height="3" fill="#6a7bb0"/></svg><div style="position:absolute;left:306.60px;top:562.30px;width:41.30px;height:12.20px;background:#4a4a4a;border-radius:3px;box-shadow:inset 0 0 0 0.6px #2e2e2e"></div><div class="ui" style="left:310.50px;top:564.50px;color:#e8e8e8;font-size:7.7px;">Global</div><svg class="ab" style="left:342.30px;top:563.90px;" width="4.40" height="9.00" viewBox="0 0 4.4 9"><path d="M0.3 3.8 L2.2 0.6 L4.1 3.8Z M0.3 5.2 L2.2 8.4 L4.1 5.2Z" fill="#d0d0d0" opacity="0.8"/></svg><div style="position:absolute;left:351.00px;top:562.30px;width:28.75px;height:12.20px;background:#4a4a4a;border-radius:3px;box-shadow:inset 0 0 0 0.6px #2e2e2e"></div><svg class="ab" style="left:351px;top:562.3px" width="29" height="12.2"><path d="M7.4 0V12.2M12.9 0V12.2M18.4 0V12.2M23.9 0V12.2M0 6.1H29" stroke="#2f2f2f" stroke-width="0.8"/><circle cx="4" cy="3" r="1.1" fill="#ddd"/></svg><div style="position:absolute;left:387.00px;top:428.90px;width:456.50px;height:131.70px;background:#000"></div><div class="mono" style="left:388.75px;top:460.70px;color:#7484d4;-webkit-text-stroke:0.1px currentColor">PYTHON INTERACTIVE CONSOLE 3.5.2 (default, Dec  1 2016, 20:58:16) [MSC v.1800 64 bit (AMD64)]</div><div class="mono" style="left:388.75px;top:475.70px;color:#7484d4;-webkit-text-stroke:0.1px currentColor">Command History:     Up/Down Arrow</div><div class="mono" style="left:388.75px;top:483.20px;color:#7484d4;-webkit-text-stroke:0.1px currentColor">Cursor:              Left/Right Home/End</div><div class="mono" style="left:388.75px;top:490.70px;color:#7484d4;-webkit-text-stroke:0.1px currentColor">Remove:              Backspace/Delete</div><div class="mono" style="left:388.75px;top:498.20px;color:#7484d4;-webkit-text-stroke:0.1px currentColor">Execute:             Enter</div><div class="mono" style="left:388.75px;top:505.70px;color:#7484d4;-webkit-text-stroke:0.1px currentColor">Autocomplete:        Ctrl-Space</div><div class="mono" style="left:388.75px;top:513.20px;color:#7484d4;-webkit-text-stroke:0.1px currentColor">Zoom:                Ctrl +/-, Ctrl-Wheel</div><div class="mono" style="left:388.75px;top:520.70px;color:#7484d4;-webkit-text-stroke:0.1px currentColor">Builtin Modules:     bpy, bpy.data, bpy.ops, bpy.props, bpy.types, bpy.context, bpy.utils, bgl, blf, mathutils</div><div class="mono" style="left:388.75px;top:528.20px;color:#7484d4;-webkit-text-stroke:0.1px currentColor">Convenience Imports: from mathutils import *; from math import *</div><div class="mono" style="left:388.75px;top:535.70px;color:#7484d4;-webkit-text-stroke:0.1px currentColor">Convenience Variables: C = bpy.context, D = bpy.data</div><div class="mono" style="left:388.75px;top:550.70px;color:#f0f0f0;-webkit-text-stroke:0.1px currentColor">&gt;&gt;&gt; </div><div style="position:absolute;left:403.68px;top:551.20px;width:0.90px;height:7.60px;background:#dc6060"></div><div style="position:absolute;left:833.00px;top:432.50px;width:7.30px;height:124.50px;background:#8e8e8e;border-radius:3.6px"></div><div style="position:absolute;left:387.00px;top:560.60px;width:456.50px;height:15.40px;background:#727272"></div><div style="position:absolute;left:387.00px;top:560.60px;width:456.50px;height:0.80px;background:#7e7e7e"></div><div style="position:absolute;left:390.90px;top:562.30px;width:16.85px;height:12.20px;background:#4a4a4a;border-radius:2.5px;box-shadow:inset 0 0 0 0.6px #2e2e2e"></div><svg class="ab" style="left:393.10px;top:563.50px;" width="9.00" height="9.00" viewBox="0 0 9 9"><rect x="1" y="1" width="7" height="7" fill="#bdbdbd" stroke="#ddd" stroke-width="0.5"/><path d="M2.2 3 L4 4.3 L2.2 5.6" stroke="#444" stroke-width="0.8" fill="none"/><rect x="4.5" y="5.5" width="2.5" height="0.8" fill="#444"/></svg><svg class="ab" style="left:402.05px;top:563.90px;" width="4.40" height="9.00" viewBox="0 0 4.4 9"><path d="M0.3 3.8 L2.2 0.6 L4.1 3.8Z M0.3 5.2 L2.2 8.4 L4.1 5.2Z" fill="#d0d0d0" opacity="0.8"/></svg><div class="ui" style="left:416.50px;top:564.50px;color:#0d0d0d;font-size:7.7px;">Console</div><div style="position:absolute;left:449.60px;top:562.30px;width:58.80px;height:12.20px;background:#999999;border-radius:3.5px;box-shadow:inset 0 0 0 0.6px #3a3a3a"></div><div class="ui" style="left:457.80px;top:564.50px;color:#0d0d0d;font-size:7.7px;">Autocomplete</div><div style="position:absolute;left:844.00px;top:15.50px;width:180.00px;height:560.50px;background:#727272"></div><div style="position:absolute;left:844.00px;top:15.50px;width:180.00px;height:0.80px;background:#808080"></div><div style="position:absolute;left:848.70px;top:17.30px;width:16.90px;height:11.20px;background:#4a4a4a;border-radius:2.5px;box-shadow:inset 0 0 0 0.6px #2e2e2e"></div><svg class="ab" style="left:850.90px;top:18.50px;" width="9.00" height="9.00" viewBox="0 0 9 9"><rect x="0.8" y="1.8" width="7.4" height="2.2" rx="1" fill="#eee"/><rect x="0.8" y="5" width="7.4" height="2.2" rx="1" fill="#eee"/><rect x="5" y="2.2" width="2.6" height="1.5" fill="#555"/><rect x="1.2" y="5.4" width="2.6" height="1.5" fill="#555"/></svg><svg class="ab" style="left:859.90px;top:18.40px;" width="4.40" height="9.00" viewBox="0 0 4.4 9"><path d="M0.3 3.8 L2.2 0.6 L4.1 3.8Z M0.3 5.2 L2.2 8.4 L4.1 5.2Z" fill="#d0d0d0" opacity="0.8"/></svg><div style="position:absolute;left:870.70px;top:17.30px;width:140.40px;height:11.20px;background:#4e4e4e;border-radius:2.5px;box-shadow:inset 0 0 0 0.6px #2e2e2e"></div><div style="position:absolute;left:882.40px;top:17.30px;width:11.70px;height:11.20px;background:#5680c2;box-shadow:inset 0 0 0 0.6px #2e3e70"></div><svg class="ab" style="left:872.05px;top:18.40px;opacity:0.8" width="9.00" height="9.00" viewBox="0 0 9 9"><rect x="1.2" y="2" width="6.6" height="5" fill="none" stroke="#bbb" stroke-width="0.9"/><rect x="3" y="3.5" width="3" height="2.2" fill="#888"/></svg><svg class="ab" style="left:883.75px;top:18.40px;opacity:0.8" width="9.00" height="9.00" viewBox="0 0 9 9"><rect x="1.5" y="1" width="5" height="6.5" fill="#e8eef8" stroke="#fff" stroke-width="0.4"/><path d="M4 2.5 L3 6" stroke="#223" stroke-width="0.9"/><rect x="4" y="3" width="3.8" height="5" fill="none" stroke="#dde" stroke-width="0.5"/></svg><svg class="ab" style="left:895.45px;top:18.40px;opacity:0.8" width="9.00" height="9.00" viewBox="0 0 9 9"><circle cx="2.6" cy="2.6" r="1.7" fill="#d8d890"/><circle cx="2.8" cy="6.6" r="1.6" fill="#eee"/><path d="M5 2.6 L7.8 1.8 L7.8 7.8 L5 7.8Z" fill="#5b6fc0"/></svg><svg class="ab" style="left:907.15px;top:18.40px;opacity:0.8" width="9.00" height="9.00" viewBox="0 0 9 9"><circle cx="4.5" cy="4.5" r="3.4" fill="#6a8aa8"/><path d="M2.5 3 Q4 5 6.5 3.8" stroke="#c8d8e8" stroke-width="0.7" fill="none"/></svg><svg class="ab" style="left:918.85px;top:18.40px;opacity:0.8" width="9.00" height="9.00" viewBox="0 0 9 9"><path d="M1 2.6 L4.6 0.9 L8.2 2.6 L8.2 6.6 L4.6 8.4 L1 6.6Z" fill="#e8a860"/><path d="M4.6 4.2 L8.2 2.6 L8.2 6.6 L4.6 8.4Z" fill="#b07838"/></svg><svg class="ab" style="left:930.55px;top:18.40px;opacity:0.8" width="9.00" height="9.00" viewBox="0 0 9 9"><rect x="0.8" y="3.6" width="4.6" height="2.6" rx="1.3" fill="none" stroke="#ccc" stroke-width="0.8" transform="rotate(-35 3 5)"/><rect x="3.8" y="2.8" width="4.6" height="2.6" rx="1.3" fill="none" stroke="#ccc" stroke-width="0.8" transform="rotate(-35 6 4)"/></svg><svg class="ab" style="left:942.25px;top:18.40px;opacity:0.8" width="9.00" height="9.00" viewBox="0 0 9 9"><path d="M1.5 7.8 L5 4.3" stroke="#9ab0d0" stroke-width="1.4"/><circle cx="6" cy="3" r="1.8" fill="none" stroke="#9ab0d0" stroke-width="1"/></svg><svg class="ab" style="left:953.95px;top:18.40px;opacity:0.8" width="9.00" height="9.00" viewBox="0 0 9 9"><circle cx="2" cy="2" r="0.7" fill="#ddd"/><circle cx="7" cy="2" r="0.7" fill="#ddd"/><circle cx="4.5" cy="7" r="0.7" fill="#ddd"/><path d="M2 2 L4.5 7 L7 2Z" fill="none" stroke="#aaa" stroke-width="0.4"/></svg><svg class="ab" style="left:965.65px;top:18.40px;opacity:0.8" width="9.00" height="9.00" viewBox="0 0 9 9"><circle cx="4.5" cy="4.5" r="3.3" fill="#b8a8a0"/><circle cx="3.5" cy="3.5" r="1.2" fill="#e8e0d8"/></svg><svg class="ab" style="left:977.35px;top:18.40px;opacity:0.8" width="9.00" height="9.00" viewBox="0 0 9 9"><rect x="1" y="1" width="7" height="7" fill="#e8d8d8"/><path d="M1 1h1.75v1.75H1zM4.5 1h1.75v1.75H4.5zM2.75 2.75h1.75v1.75H2.75zM6.25 2.75H8v1.75H6.25zM1 4.5h1.75v1.75H1zM4.5 4.5h1.75v1.75H4.5zM2.75 6.25h1.75V8H2.75zM6.25 6.25H8V8H6.25z" fill="#a03040"/></svg><svg class="ab" style="left:989.05px;top:18.40px;opacity:0.8" width="9.00" height="9.00" viewBox="0 0 9 9"><path d="M4.5 1 V8 M1 4.5 H8" stroke="#d8c890" stroke-width="0.9"/><circle cx="2" cy="2" r="1" fill="#e8d8a0"/><circle cx="7" cy="7" r="1" fill="#e8d8a0"/></svg><svg class="ab" style="left:1000.75px;top:18.40px;opacity:0.8" width="9.00" height="9.00" viewBox="0 0 9 9"><path d="M1.5 4 L4 6.8 L7.5 1.5" stroke="#7c8cb8" stroke-width="1.6" fill="none"/><circle cx="7" cy="2.3" r="1.4" fill="#ccd"/></svg><svg class="ab" style="left:848.00px;top:35.50px;" width="9.00" height="9.00" viewBox="0 0 9 9"><path d="M1 8 L4 5" stroke="#eee" stroke-width="0.9"/><path d="M3 3.5 L6 1 L8 3 L5.5 6Z" fill="#e8e8e8"/></svg><svg class="ab" style="left:860.50px;top:35.50px;" width="9.00" height="9.00" viewBox="0 0 9 9"><circle cx="2.6" cy="2.6" r="1.7" fill="#d8d890"/><circle cx="2.8" cy="6.6" r="1.6" fill="#eee"/><path d="M5 2.6 L7.8 1.8 L7.8 7.8 L5 7.8Z" fill="#5b6fc0"/></svg><div class="ui" style="left:871.50px;top:36.10px;color:#0d0d0d;font-size:7.7px;">Scene</div><div style="position:absolute;left:847.60px;top:54.10px;width:156.30px;height:33.30px;background:#8a8a8a;border-radius:3px;box-shadow:inset 0 0 0 0.7px #4a4a4a"></div><div style="position:absolute;left:850.60px;top:58.30px;width:150.40px;height:9.90px;background:#5680c2"></div><svg class="ab" style="left:851.20px;top:58.60px;" width="9.00" height="9.50" viewBox="0 0 9 9.5"><rect x="1" y="0.8" width="5.5" height="7.2" fill="#eef2fa" stroke="#fff" stroke-width="0.4"/><path d="M4 2.2 L3 6.5" stroke="#223" stroke-width="0.9"/><rect x="4" y="3" width="4" height="5.8" fill="none" stroke="#dde" stroke-width="0.6"/></svg><div class="ui" style="left:862.50px;top:59.10px;color:#0a0a1a;font-size:7.7px;">RenderLayer</div><div style="position:absolute;left:992.70px;top:59.30px;width:7.70px;height:7.90px;background:#2e3650;border-radius:1.5px"></div><svg class="ab" style="left:993.00px;top:59.30px;" width="8.00" height="8.00" viewBox="0 0 8 8"><path d="M1.2 4 L3.2 6.2 L7 1.2" stroke="#f0f0f0" stroke-width="1.1" fill="none"/></svg><svg class="ab" style="left:852.00px;top:80.00px;" width="5.00" height="5.00" viewBox="0 0 5 5"><circle cx="2.5" cy="2.5" r="1.8" fill="none" stroke="#bbb" stroke-width="0.6"/></svg><div style="position:absolute;left:924.50px;top:82.30px;width:6.00px;height:0.90px;background:#444"></div><div style="position:absolute;left:1009.00px;top:54.60px;width:10.00px;height:10.00px;background:#999999;border-radius:0px;box-shadow:inset 0 0 0 0.6px #3a3a3a"></div><div style="position:absolute;left:1009.00px;top:54.60px;width:10.00px;height:21.00px;border-radius:3px;box-shadow:inset 0 0 0 0.6px #4a4a4a;background:#9c9c9c"></div><div style="position:absolute;left:1009.00px;top:64.40px;width:10.00px;height:0.60px;background:#6a6a6a"></div><svg class="ab" style="left:1010.00px;top:55.20px;" width="8.00" height="9.00" viewBox="0 0 8 9"><path d="M4 1.2 V7.8 M0.8 4.5 H7.2" stroke="#f4f4f4" stroke-width="1.3"/></svg><div style="position:absolute;left:1011.00px;top:69.60px;width:6.00px;height:1.00px;background:#e8e8e8"></div><div style="position:absolute;left:1009.00px;top:77.00px;width:10.30px;height:10.80px;background:#3e3e3e;border-radius:3px;box-shadow:inset 0 0 0 0.6px #2e2e2e"></div><svg class="ab" style="left:1010.00px;top:78.00px;" width="8.50" height="8.50" viewBox="0 0 8.5 8.5"><path d="M1 7.5 L3.8 4.7" stroke="#eee" stroke-width="0.9"/><path d="M2.8 3.5 L5.8 1 L7.8 3 L5.3 6Z" fill="#e8e8e8"/></svg><div style="position:absolute;left:844.00px;top:91.80px;width:180.00px;height:0.80px;background:#5a5a5a"></div><div style="position:absolute;left:844.00px;top:92.60px;width:180.00px;height:0.60px;background:#7c7c7c"></div><svg class="ab" style="left:849.50px;top:96.00px;" width="7.00" height="7.00" viewBox="0 0 7 7"><path d="M0.5 1 L6 1 L3.25 5.8Z" fill="#111"/></svg><div class="ui" style="left:857.50px;top:95.20px;color:#0d0d0d;font-size:7.7px;">Layer</div><svg class="ab" style="left:1010.00px;top:97.50px;" width="11.00" height="5.00" viewBox="0 0 11 5"><path d="M1 1h1M3 1h1M5 1h1M7 1h1M9 1h1M1 3.5h1M3 3.5h1M5 3.5h1M7 3.5h1M9 3.5h1" stroke="#5a5a5a" stroke-width="0.8"/></svg><div class="ui" style="left:852.00px;top:111.20px;color:#0d0d0d;font-size:7.7px;">Scene:</div><div class="ui" style="left:939.70px;top:111.20px;color:#0d0d0d;font-size:7.7px;">Layer:</div><svg class="ab" style="left:847.60px;top:121.30px" width="39.60" height="15.70"><rect x="0.4" y="0.4" width="38.80" height="14.90" rx="3" fill="#505050" stroke="#2c2c2c" stroke-width="0.8"/><rect x="0.00" y="0.00" width="7.92" height="7.85" fill="#6e96d8"/><path d="M7.92 0V15.70M15.84 0V15.70M23.76 0V15.70M31.68 0V15.70M0 7.85H39.60" stroke="#2c2c2c" stroke-width="0.8"/></svg><svg class="ab" style="left:890.90px;top:121.30px" width="40.10" height="15.70"><rect x="0.4" y="0.4" width="39.30" height="14.90" rx="3" fill="#505050" stroke="#2c2c2c" stroke-width="0.8"/><path d="M8.02 0V15.70M16.04 0V15.70M24.06 0V15.70M32.08 0V15.70M0 7.85H40.10" stroke="#2c2c2c" stroke-width="0.8"/></svg><svg class="ab" style="left:935.60px;top:121.30px" width="39.00" height="15.70"><rect x="0.4" y="0.4" width="38.20" height="14.90" rx="3" fill="#6389cc" stroke="#1e2a50" stroke-width="0.8"/><path d="M7.80 0V15.70M15.60 0V15.70M23.40 0V15.70M31.20 0V15.70M0 7.85H39.00" stroke="#1e2a50" stroke-width="0.8"/></svg><svg class="ab" style="left:979.30px;top:121.30px" width="40.70" height="15.70"><rect x="0.4" y="0.4" width="39.90" height="14.90" rx="3" fill="#6389cc" stroke="#1e2a50" stroke-width="0.8"/><path d="M8.14 0V15.70M16.28 0V15.70M24.42 0V15.70M32.56 0V15.70M0 7.85H40.70" stroke="#1e2a50" stroke-width="0.8"/></svg><div class="ui" style="left:852.00px;top:140.30px;color:#0d0d0d;font-size:7.7px;">Exclude:</div><div class="ui" style="left:939.70px;top:140.30px;color:#0d0d0d;font-size:7.7px;">Mask Layer:</div><svg class="ab" style="left:847.60px;top:151.00px" width="39.60" height="15.60"><rect x="0.4" y="0.4" width="38.80" height="14.80" rx="3" fill="#505050" stroke="#2c2c2c" stroke-width="0.8"/><path d="M7.92 0V15.60M15.84 0V15.60M23.76 0V15.60M31.68 0V15.60M0 7.80H39.60" stroke="#2c2c2c" stroke-width="0.8"/></svg><svg class="ab" style="left:890.90px;top:151.00px" width="40.10" height="15.60"><rect x="0.4" y="0.4" width="39.30" height="14.80" rx="3" fill="#505050" stroke="#2c2c2c" stroke-width="0.8"/><path d="M8.02 0V15.60M16.04 0V15.60M24.06 0V15.60M32.08 0V15.60M0 7.80H40.10" stroke="#2c2c2c" stroke-width="0.8"/></svg><svg class="ab" style="left:935.60px;top:151.00px" width="39.00" height="15.60"><rect x="0.4" y="0.4" width="38.20" height="14.80" rx="3" fill="#505050" stroke="#2c2c2c" stroke-width="0.8"/><path d="M7.80 0V15.60M15.60 0V15.60M23.40 0V15.60M31.20 0V15.60M0 7.80H39.00" stroke="#2c2c2c" stroke-width="0.8"/></svg><svg class="ab" style="left:979.30px;top:151.00px" width="40.70" height="15.60"><rect x="0.4" y="0.4" width="39.90" height="14.80" rx="3" fill="#505050" stroke="#2c2c2c" stroke-width="0.8"/><path d="M8.14 0V15.60M16.28 0V15.60M24.42 0V15.60M32.56 0V15.60M0 7.80H40.70" stroke="#2c2c2c" stroke-width="0.8"/></svg><div class="ui" style="left:852.00px;top:171.60px;color:#0d0d0d;font-size:7.7px;">Material:</div><div style="position:absolute;left:847.60px;top:181.70px;width:83.40px;height:10.30px;background:#a3a3a3;border-radius:3px;box-shadow:inset 0 0 0 0.7px #4a4a4a"></div><svg class="ab" style="left:849.50px;top:182.60px;" width="9.00" height="9.00" viewBox="0 0 9 9"><circle cx="4.5" cy="4.5" r="3.3" fill="#d8c8c8" stroke="#a04050" stroke-width="0.8"/><path d="M2.5 3.5 L6.5 5.5" stroke="#a04050" stroke-width="0.6"/></svg><div style="position:absolute;left:847.60px;top:198.60px;width:83.40px;height:9.90px;background:#8e8e8e;border-radius:5px;box-shadow:inset 0 0 0 0.7px #4a4a4a"></div><svg class="ab" style="left:850.00px;top:200.50px;" width="4.00" height="6.00" viewBox="0 0 4 6"><path d="M3 1 L1 3 L3 5Z" fill="#333"/></svg><svg class="ab" style="left:925.00px;top:200.50px;" width="4.00" height="6.00" viewBox="0 0 4 6"><path d="M1 1 L3 3 L1 5Z" fill="#333"/></svg><div class="ui" style="left:855.50px;top:199.10px;color:#0d0d0d;font-size:7.7px;">Samples:</div><div class="ui" style="left:918.50px;top:199.10px;color:#0d0d0d;font-size:7.7px;">0</div><div style="position:absolute;left:937.00px;top:171.20px;width:8.00px;height:7.40px;background:#4a4a4a;border-radius:1.6px;box-shadow:inset 0 0 0 0.5px #333"></div><svg class="ab" style="left:937.00px;top:170.00px;" width="9.00" height="9.00" viewBox="0 0 9 9"><path d="M1.8 5 L3.8 7 L7.6 1.6" stroke="#f0f0f0" stroke-width="1.1" fill="none"/></svg><div class="ui" style="left:949.00px;top:170.70px;color:#0d0d0d;font-size:7.7px;">Use Environment</div><div style="position:absolute;left:937.00px;top:183.20px;width:8.00px;height:7.40px;background:#4a4a4a;border-radius:1.6px;box-shadow:inset 0 0 0 0.5px #333"></div><svg class="ab" style="left:937.00px;top:182.00px;" width="9.00" height="9.00" viewBox="0 0 9 9"><path d="M1.8 5 L3.8 7 L7.6 1.6" stroke="#f0f0f0" stroke-width="1.1" fill="none"/></svg><div class="ui" style="left:949.00px;top:182.70px;color:#0d0d0d;font-size:7.7px;">Use AO</div><div style="position:absolute;left:937.00px;top:195.50px;width:8.00px;height:7.40px;background:#4a4a4a;border-radius:1.6px;box-shadow:inset 0 0 0 0.5px #333"></div><svg class="ab" style="left:937.00px;top:194.30px;" width="9.00" height="9.00" viewBox="0 0 9 9"><path d="M1.8 5 L3.8 7 L7.6 1.6" stroke="#f0f0f0" stroke-width="1.1" fill="none"/></svg><div class="ui" style="left:949.00px;top:195.00px;color:#0d0d0d;font-size:7.7px;">Use Surfaces</div><div style="position:absolute;left:937.00px;top:207.50px;width:8.00px;height:7.40px;background:#4a4a4a;border-radius:1.6px;box-shadow:inset 0 0 0 0.5px #333"></div><svg class="ab" style="left:937.00px;top:206.30px;" width="9.00" height="9.00" viewBox="0 0 9 9"><path d="M1.8 5 L3.8 7 L7.6 1.6" stroke="#f0f0f0" stroke-width="1.1" fill="none"/></svg><div class="ui" style="left:949.00px;top:207.00px;color:#0d0d0d;font-size:7.7px;">Use Hair</div><div style="position:absolute;left:847.00px;top:220.20px;width:177.00px;height:0.80px;background:#5a5a5a"></div><div style="position:absolute;left:847.00px;top:221.00px;width:177.00px;height:0.60px;background:#7c7c7c"></div><svg class="ab" style="left:850.00px;top:224.80px;" width="6.00" height="7.00" viewBox="0 0 6 7"><path d="M0.8 0.5 L5.5 3.2 L0.8 5.9Z" fill="#111"/></svg><div class="ui" style="left:857.00px;top:223.50px;color:#0d0d0d;font-size:7.7px;">Passes</div><svg class="ab" style="left:1010.00px;top:226.00px;" width="11.00" height="5.00" viewBox="0 0 11 5"><path d="M1 1h1M3 1h1M5 1h1M7 1h1M9 1h1M1 3.5h1M3 3.5h1M5 3.5h1M7 3.5h1M9 3.5h1" stroke="#5a5a5a" stroke-width="0.8"/></svg><div style="position:absolute;left:847.00px;top:233.20px;width:177.00px;height:0.80px;background:#5a5a5a"></div><div style="position:absolute;left:847.00px;top:234.00px;width:177.00px;height:0.60px;background:#7c7c7c"></div><svg class="ab" style="left:850.00px;top:237.80px;" width="6.00" height="7.00" viewBox="0 0 6 7"><path d="M0.8 0.5 L5.5 3.2 L0.8 5.9Z" fill="#111"/></svg><div style="position:absolute;left:857.00px;top:236.50px;width:8.00px;height:8.00px;border-radius:1.6px;box-shadow:inset 0 0 0 0.6px #555"></div><div class="ui" style="left:868.50px;top:236.50px;color:#0d0d0d;font-size:7.7px;">Views</div><svg class="ab" style="left:1010.00px;top:239.00px;" width="11.00" height="5.00" viewBox="0 0 11 5"><path d="M1 1h1M3 1h1M5 1h1M7 1h1M9 1h1M1 3.5h1M3 3.5h1M5 3.5h1M7 3.5h1M9 3.5h1" stroke="#5a5a5a" stroke-width="0.8"/></svg><svg class="ab" style="left:377.0px;top:15.5px" width="9" height="9"><path d="M0 0 L9 9 M3 0 L9 6 M6 0 L9 3" stroke="#ffffff" stroke-opacity="0.35" stroke-width="0.7"/><path d="M1 0 L9 8 M4 0 L9 5 M7 0 L9 2" stroke="#000" stroke-opacity="0.3" stroke-width="0.6"/></svg><svg class="ab" style="left:834.5px;top:15.5px" width="9" height="9"><path d="M0 0 L9 9 M3 0 L9 6 M6 0 L9 3" stroke="#ffffff" stroke-opacity="0.35" stroke-width="0.7"/><path d="M1 0 L9 8 M4 0 L9 5 M7 0 L9 2" stroke="#000" stroke-opacity="0.3" stroke-width="0.6"/></svg><svg class="ab" style="left:1015.0px;top:15.5px" width="9" height="9"><path d="M0 0 L9 9 M3 0 L9 6 M6 0 L9 3" stroke="#ffffff" stroke-opacity="0.35" stroke-width="0.7"/><path d="M1 0 L9 8 M4 0 L9 5 M7 0 L9 2" stroke="#000" stroke-opacity="0.3" stroke-width="0.6"/></svg><svg class="ab" style="left:377.0px;top:428.9px" width="9" height="9"><path d="M0 0 L9 9 M3 0 L9 6 M6 0 L9 3" stroke="#ffffff" stroke-opacity="0.35" stroke-width="0.7"/><path d="M1 0 L9 8 M4 0 L9 5 M7 0 L9 2" stroke="#000" stroke-opacity="0.3" stroke-width="0.6"/></svg><svg class="ab" style="left:834.5px;top:428.9px" width="9" height="9"><path d="M0 0 L9 9 M3 0 L9 6 M6 0 L9 3" stroke="#ffffff" stroke-opacity="0.35" stroke-width="0.7"/><path d="M1 0 L9 8 M4 0 L9 5 M7 0 L9 2" stroke="#000" stroke-opacity="0.3" stroke-width="0.6"/></svg><svg class="ab" style="left:0.0px;top:6.5px" width="9" height="9"><path d="M0 0 L9 9 M0 3 L6 9 M0 6 L3 9" stroke="#ffffff" stroke-opacity="0.3" stroke-width="0.7"/><path d="M0 1 L8 9 M0 4 L5 9 M0 7 L2 9" stroke="#000" stroke-opacity="0.3" stroke-width="0.6"/></svg><svg class="ab" style="left:0.0px;top:419.9px" width="9" height="9"><path d="M0 0 L9 9 M0 3 L6 9 M0 6 L3 9" stroke="#ffffff" stroke-opacity="0.3" stroke-width="0.7"/><path d="M0 1 L8 9 M0 4 L5 9 M0 7 L2 9" stroke="#000" stroke-opacity="0.3" stroke-width="0.6"/></svg><svg class="ab" style="left:387.0px;top:419.9px" width="9" height="9"><path d="M0 0 L9 9 M0 3 L6 9 M0 6 L3 9" stroke="#ffffff" stroke-opacity="0.3" stroke-width="0.7"/><path d="M0 1 L8 9 M0 4 L5 9 M0 7 L2 9" stroke="#000" stroke-opacity="0.3" stroke-width="0.6"/></svg><svg class="ab" style="left:0.0px;top:567.0px" width="9" height="9"><path d="M0 0 L9 9 M0 3 L6 9 M0 6 L3 9" stroke="#ffffff" stroke-opacity="0.3" stroke-width="0.7"/><path d="M0 1 L8 9 M0 4 L5 9 M0 7 L2 9" stroke="#000" stroke-opacity="0.3" stroke-width="0.6"/></svg><svg class="ab" style="left:387.0px;top:567.0px" width="9" height="9"><path d="M0 0 L9 9 M0 3 L6 9 M0 6 L3 9" stroke="#ffffff" stroke-opacity="0.3" stroke-width="0.7"/><path d="M0 1 L8 9 M0 4 L5 9 M0 7 L2 9" stroke="#000" stroke-opacity="0.3" stroke-width="0.6"/></svg><svg class="ab" style="left:844.0px;top:567.0px" width="9" height="9"><path d="M0 0 L9 9 M0 3 L6 9 M0 6 L3 9" stroke="#ffffff" stroke-opacity="0.3" stroke-width="0.7"/><path d="M0 1 L8 9 M0 4 L5 9 M0 7 L2 9" stroke="#000" stroke-opacity="0.3" stroke-width="0.6"/></svg><div style="position:absolute;left:387.50px;top:28.50px;width:6.00px;height:8.00px;background:#5a5a5a;border-radius:1.5px;opacity:0.85"></div><svg class="ab" style="left:388.00px;top:30.00px;" width="5.00" height="5.00" viewBox="0 0 5 5"><path d="M2.5 0.6 V4.4 M0.6 2.5 H4.4" stroke="#bbb" stroke-width="0.8"/></svg><div style="position:absolute;left:0.00px;top:442.50px;width:6.00px;height:8.00px;background:#5a5a5a;border-radius:1.5px;opacity:0.85"></div><svg class="ab" style="left:0.50px;top:444.00px;" width="5.00" height="5.00" viewBox="0 0 5 5"><path d="M2.5 0.6 V4.4 M0.6 2.5 H4.4" stroke="#bbb" stroke-width="0.8"/></svg><div style="position:absolute;left:380.50px;top:442.50px;width:6.00px;height:8.00px;background:#5a5a5a;border-radius:1.5px;opacity:0.85"></div><svg class="ab" style="left:381.00px;top:444.00px;" width="5.00" height="5.00" viewBox="0 0 5 5"><path d="M2.5 0.6 V4.4 M0.6 2.5 H4.4" stroke="#bbb" stroke-width="0.8"/></svg></body></html>
